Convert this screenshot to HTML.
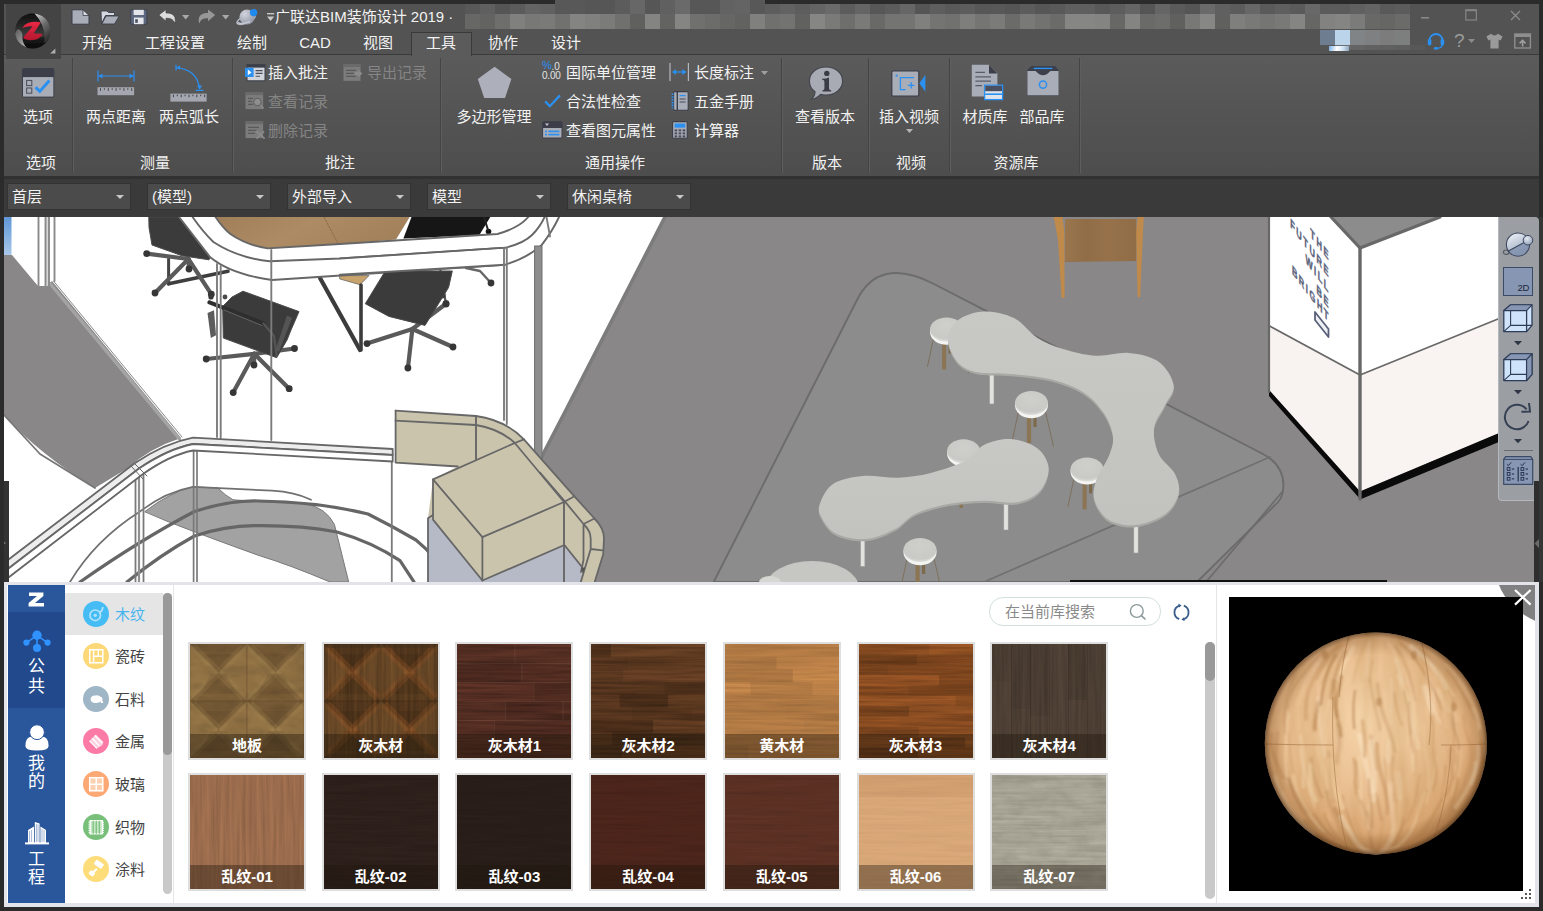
<!DOCTYPE html>
<html lang="zh-CN">
<head>
<meta charset="utf-8">
<title>广联达BIM装饰设计 2019</title>
<style>
*{box-sizing:border-box;margin:0;padding:0}
html,body{width:1543px;height:911px;overflow:hidden;background:#2b2b2b}
body{position:relative;font-family:"Liberation Sans","Noto Sans CJK SC",sans-serif;font-size:15px;color:#f2f2f2}
.abs{position:absolute}
#title{left:4px;top:4px;width:1535px;height:27px;background:#535353}
#tabs{left:4px;top:31px;width:1535px;height:24px;background:#535353;border-bottom:1px solid #3a3a3a}
#ribbon{left:4px;top:55px;width:1535px;height:121px;background:linear-gradient(#5b5b5b,#4d4d4d)}
#tbar{left:4px;top:176px;width:1535px;height:41px;background:#3a3a3a;border-top:3px solid #313131}
.tab{position:absolute;top:31px;height:24px;line-height:24px;text-align:center;white-space:nowrap;transform:translateX(-50%)}
.gl{position:absolute;top:151px;height:24px;line-height:24px;white-space:nowrap;transform:translateX(-50%)}
.bl{position:absolute;top:105px;height:24px;line-height:24px;white-space:nowrap;transform:translateX(-50%)}
.sl{position:absolute;height:24px;line-height:24px;white-space:nowrap}
.dis{color:#858585}
.sep{position:absolute;top:58px;width:2px;height:115px;background:#444;border-right:1px solid #5e5e5e}
.dd{position:absolute;top:183px;width:124px;height:27px;background:#4b4b4b;border:1px solid #333;line-height:25px;padding-left:4px;white-space:nowrap}
.dd:after{content:"";position:absolute;right:6px;top:11px;border:4px solid transparent;border-top:4px solid #c8c8c8}
#view{left:4px;top:217px;width:1531px;height:365px;background:#fff;overflow:hidden}
#panel{left:4px;top:582px;width:1535px;height:325px;background:#fff;border:3px solid #e3e3ea;border-bottom-width:4px;border-right-width:4px}

#side{left:8px;top:585px;width:57px;height:318px;background:#2a569b}
#side .sel{position:absolute;left:0;top:27px;width:57px;height:96px;background:#21498c}
.sv{position:absolute;left:0;width:57px;text-align:center;font-size:17px;line-height:18px;color:#fff}
.cat{position:absolute;left:65px;width:98px;height:42px}
.cat .ci{position:absolute;left:17.5px;top:7.5px;width:26.5px;height:26.5px;border-radius:50%}
.cat span{position:absolute;left:50px;top:10px;line-height:24px;font-size:15px;color:#444}
.th{position:absolute;width:118px;height:118px;border:2px solid #dedede;overflow:hidden;background:#876}
.th svg{position:absolute;left:0;top:0}
.th b{position:absolute;left:0;bottom:0;width:114px;height:24px;line-height:24px;background:rgba(30,20,10,.38);color:#fff;font-size:15px;text-align:center;font-weight:bold}
</style>
</head>
<body>
<div id="title" class="abs"></div>
<div id="tabs" class="abs"></div>
<div id="ribbon" class="abs"></div>
<div id="tbar" class="abs"></div>

<!-- title text -->
<div class="abs" style="left:275px;top:5px;height:24px;line-height:24px;white-space:nowrap;font-size:15px">广联达BIM装饰设计 2019 ·</div>
<!-- tabs -->
<div class="abs" style="left:411px;top:32px;width:61px;height:24px;background:#5b5b5b;border:1px solid #3a3a3a;border-bottom:none"></div>
<div class="tab" style="left:97px">开始</div>
<div class="tab" style="left:175px">工程设置</div>
<div class="tab" style="left:252px">绘制</div>
<div class="tab" style="left:315px">CAD</div>
<div class="tab" style="left:378px">视图</div>
<div class="tab" style="left:441px">工具</div>
<div class="tab" style="left:503px">协作</div>
<div class="tab" style="left:566px">设计</div>
<!-- ribbon groups -->
<div class="sep" style="left:72px"></div>
<div class="sep" style="left:232px"></div>
<div class="sep" style="left:440px"></div>
<div class="sep" style="left:781px"></div>
<div class="sep" style="left:868px"></div>
<div class="sep" style="left:949px"></div>
<div class="sep" style="left:1079px"></div>
<div class="bl" style="left:38px">选项</div>
<div class="bl" style="left:116px">两点距离</div>
<div class="bl" style="left:189px">两点弧长</div>
<div class="bl" style="left:494px">多边形管理</div>
<div class="bl" style="left:825px">查看版本</div>
<div class="bl" style="left:909px">插入视频</div>
<div class="bl" style="left:985px">材质库</div>
<div class="bl" style="left:1042px">部品库</div>
<div class="gl" style="left:41px">选项</div>
<div class="gl" style="left:155px">测量</div>
<div class="gl" style="left:340px">批注</div>
<div class="gl" style="left:615px">通用操作</div>
<div class="gl" style="left:827px">版本</div>
<div class="gl" style="left:911px">视频</div>
<div class="gl" style="left:1016px">资源库</div>
<div class="sl" style="left:268px;top:61px">插入批注</div>
<div class="sl dis" style="left:367px;top:61px">导出记录</div>
<div class="sl dis" style="left:268px;top:90px">查看记录</div>
<div class="sl dis" style="left:268px;top:119px">删除记录</div>
<div class="sl" style="left:566px;top:61px">国际单位管理</div>
<div class="sl" style="left:566px;top:90px">合法性检查</div>
<div class="sl" style="left:566px;top:119px">查看图元属性</div>
<div class="sl" style="left:694px;top:61px">长度标注</div>
<div class="sl" style="left:694px;top:90px">五金手册</div>
<div class="sl" style="left:694px;top:119px">计算器</div>
<!-- dropdowns -->
<div class="dd" style="left:7px">首层</div>
<div class="dd" style="left:147px">(模型)</div>
<div class="dd" style="left:287px">外部导入</div>
<div class="dd" style="left:427px">模型</div>
<div class="dd" style="left:567px">休闲桌椅</div>
<div class="abs" style="left:465px;top:4px;width:15px;height:10px;background:#585858"></div><div class="abs" style="left:465px;top:14px;width:15px;height:15px;background:#676765"></div><div class="abs" style="left:480px;top:4px;width:15px;height:10px;background:#5f5f5f"></div><div class="abs" style="left:480px;top:14px;width:15px;height:15px;background:#636361"></div><div class="abs" style="left:495px;top:4px;width:15px;height:10px;background:#555555"></div><div class="abs" style="left:495px;top:14px;width:15px;height:15px;background:#6e6e6c"></div><div class="abs" style="left:510px;top:4px;width:15px;height:10px;background:#5b5b5b"></div><div class="abs" style="left:510px;top:14px;width:15px;height:15px;background:#80807e"></div><div class="abs" style="left:525px;top:4px;width:15px;height:10px;background:#646464"></div><div class="abs" style="left:525px;top:14px;width:15px;height:15px;background:#787876"></div><div class="abs" style="left:540px;top:4px;width:15px;height:10px;background:#616161"></div><div class="abs" style="left:540px;top:14px;width:15px;height:15px;background:#7a7a78"></div><div class="abs" style="left:555px;top:0px;width:15px;height:15px;background:#585858"></div><div class="abs" style="left:555px;top:14px;width:15px;height:15px;background:#71716f"></div><div class="abs" style="left:570px;top:0px;width:15px;height:15px;background:#585858"></div><div class="abs" style="left:570px;top:14px;width:15px;height:15px;background:#848482"></div><div class="abs" style="left:585px;top:0px;width:15px;height:15px;background:#565656"></div><div class="abs" style="left:585px;top:14px;width:15px;height:15px;background:#80807e"></div><div class="abs" style="left:600px;top:0px;width:15px;height:15px;background:#565656"></div><div class="abs" style="left:600px;top:14px;width:15px;height:15px;background:#7b7b79"></div><div class="abs" style="left:615px;top:0px;width:15px;height:15px;background:#5c5c5c"></div><div class="abs" style="left:615px;top:14px;width:15px;height:15px;background:#70706e"></div><div class="abs" style="left:630px;top:0px;width:15px;height:15px;background:#676767"></div><div class="abs" style="left:630px;top:14px;width:15px;height:15px;background:#60605e"></div><div class="abs" style="left:645px;top:0px;width:15px;height:15px;background:#565656"></div><div class="abs" style="left:645px;top:14px;width:15px;height:15px;background:#848482"></div><div class="abs" style="left:660px;top:0px;width:15px;height:15px;background:#606060"></div><div class="abs" style="left:660px;top:14px;width:15px;height:15px;background:#636361"></div><div class="abs" style="left:675px;top:0px;width:15px;height:15px;background:#6a6a6a"></div><div class="abs" style="left:675px;top:14px;width:15px;height:15px;background:#858583"></div><div class="abs" style="left:690px;top:0px;width:15px;height:15px;background:#575757"></div><div class="abs" style="left:690px;top:14px;width:15px;height:15px;background:#70706e"></div><div class="abs" style="left:705px;top:0px;width:15px;height:15px;background:#575757"></div><div class="abs" style="left:705px;top:14px;width:15px;height:15px;background:#6c6c6a"></div><div class="abs" style="left:720px;top:0px;width:15px;height:15px;background:#626262"></div><div class="abs" style="left:720px;top:14px;width:15px;height:15px;background:#666664"></div><div class="abs" style="left:735px;top:0px;width:15px;height:15px;background:#646464"></div><div class="abs" style="left:735px;top:14px;width:15px;height:15px;background:#626260"></div><div class="abs" style="left:750px;top:0px;width:15px;height:15px;background:#585858"></div><div class="abs" style="left:750px;top:14px;width:15px;height:15px;background:#80807e"></div><div class="abs" style="left:765px;top:4px;width:15px;height:10px;background:#5d5d5d"></div><div class="abs" style="left:765px;top:14px;width:15px;height:15px;background:#70706e"></div><div class="abs" style="left:780px;top:4px;width:15px;height:10px;background:#626262"></div><div class="abs" style="left:780px;top:14px;width:15px;height:15px;background:#737371"></div><div class="abs" style="left:795px;top:4px;width:15px;height:10px;background:#5d5d5d"></div><div class="abs" style="left:795px;top:14px;width:15px;height:15px;background:#61615f"></div><div class="abs" style="left:810px;top:4px;width:15px;height:10px;background:#646464"></div><div class="abs" style="left:810px;top:14px;width:15px;height:15px;background:#868684"></div><div class="abs" style="left:825px;top:4px;width:15px;height:10px;background:#6a6a6a"></div><div class="abs" style="left:825px;top:14px;width:15px;height:15px;background:#7a7a78"></div><div class="abs" style="left:840px;top:4px;width:15px;height:10px;background:#5c5c5c"></div><div class="abs" style="left:840px;top:14px;width:15px;height:15px;background:#6e6e6c"></div><div class="abs" style="left:855px;top:4px;width:15px;height:10px;background:#646464"></div><div class="abs" style="left:855px;top:14px;width:15px;height:15px;background:#7a7a78"></div><div class="abs" style="left:870px;top:4px;width:15px;height:10px;background:#575757"></div><div class="abs" style="left:870px;top:14px;width:15px;height:15px;background:#696967"></div><div class="abs" style="left:885px;top:4px;width:15px;height:10px;background:#5c5c5c"></div><div class="abs" style="left:885px;top:14px;width:15px;height:15px;background:#747472"></div><div class="abs" style="left:900px;top:4px;width:15px;height:10px;background:#666666"></div><div class="abs" style="left:900px;top:14px;width:15px;height:15px;background:#747472"></div><div class="abs" style="left:915px;top:4px;width:15px;height:10px;background:#555555"></div><div class="abs" style="left:915px;top:14px;width:15px;height:15px;background:#80807e"></div><div class="abs" style="left:930px;top:4px;width:15px;height:10px;background:#5e5e5e"></div><div class="abs" style="left:930px;top:14px;width:15px;height:15px;background:#747472"></div><div class="abs" style="left:945px;top:4px;width:15px;height:10px;background:#595959"></div><div class="abs" style="left:945px;top:14px;width:15px;height:15px;background:#71716f"></div><div class="abs" style="left:960px;top:4px;width:15px;height:10px;background:#5d5d5d"></div><div class="abs" style="left:960px;top:14px;width:15px;height:15px;background:#7e7e7c"></div><div class="abs" style="left:975px;top:4px;width:15px;height:10px;background:#575757"></div><div class="abs" style="left:975px;top:14px;width:15px;height:15px;background:#757573"></div><div class="abs" style="left:990px;top:4px;width:15px;height:10px;background:#585858"></div><div class="abs" style="left:990px;top:14px;width:15px;height:15px;background:#7b7b79"></div><div class="abs" style="left:1005px;top:4px;width:15px;height:10px;background:#555555"></div><div class="abs" style="left:1005px;top:14px;width:15px;height:15px;background:#6b6b69"></div><div class="abs" style="left:1020px;top:4px;width:15px;height:10px;background:#5c5c5c"></div><div class="abs" style="left:1020px;top:14px;width:15px;height:15px;background:#797977"></div><div class="abs" style="left:1035px;top:4px;width:15px;height:10px;background:#565656"></div><div class="abs" style="left:1035px;top:14px;width:15px;height:15px;background:#727270"></div><div class="abs" style="left:1050px;top:4px;width:15px;height:10px;background:#595959"></div><div class="abs" style="left:1050px;top:14px;width:15px;height:15px;background:#6b6b69"></div><div class="abs" style="left:1065px;top:4px;width:15px;height:10px;background:#5f5f5f"></div><div class="abs" style="left:1065px;top:14px;width:15px;height:15px;background:#868684"></div><div class="abs" style="left:1080px;top:4px;width:15px;height:10px;background:#5f5f5f"></div><div class="abs" style="left:1080px;top:14px;width:15px;height:15px;background:#868684"></div><div class="abs" style="left:1095px;top:4px;width:15px;height:10px;background:#585858"></div><div class="abs" style="left:1095px;top:14px;width:15px;height:15px;background:#848482"></div><div class="abs" style="left:1110px;top:4px;width:15px;height:10px;background:#5d5d5d"></div><div class="abs" style="left:1110px;top:14px;width:15px;height:15px;background:#676765"></div><div class="abs" style="left:1125px;top:4px;width:15px;height:10px;background:#656565"></div><div class="abs" style="left:1125px;top:14px;width:15px;height:15px;background:#848482"></div><div class="abs" style="left:1140px;top:4px;width:15px;height:10px;background:#555555"></div><div class="abs" style="left:1140px;top:14px;width:15px;height:15px;background:#6a6a68"></div><div class="abs" style="left:1155px;top:4px;width:15px;height:10px;background:#656565"></div><div class="abs" style="left:1155px;top:14px;width:15px;height:15px;background:#6d6d6b"></div><div class="abs" style="left:1170px;top:4px;width:15px;height:10px;background:#5a5a5a"></div><div class="abs" style="left:1170px;top:14px;width:15px;height:15px;background:#60605e"></div><div class="abs" style="left:1185px;top:4px;width:15px;height:10px;background:#555555"></div><div class="abs" style="left:1185px;top:14px;width:15px;height:15px;background:#787876"></div><div class="abs" style="left:1200px;top:4px;width:15px;height:10px;background:#6a6a6a"></div><div class="abs" style="left:1200px;top:14px;width:15px;height:15px;background:#878785"></div><div class="abs" style="left:1215px;top:4px;width:15px;height:10px;background:#606060"></div><div class="abs" style="left:1215px;top:14px;width:15px;height:15px;background:#60605e"></div><div class="abs" style="left:1230px;top:4px;width:15px;height:10px;background:#5c5c5c"></div><div class="abs" style="left:1230px;top:14px;width:15px;height:15px;background:#7f7f7d"></div><div class="abs" style="left:1245px;top:4px;width:15px;height:10px;background:#676767"></div><div class="abs" style="left:1245px;top:14px;width:15px;height:15px;background:#797977"></div><div class="abs" style="left:1260px;top:4px;width:15px;height:10px;background:#5a5a5a"></div><div class="abs" style="left:1260px;top:14px;width:15px;height:15px;background:#757573"></div><div class="abs" style="left:1275px;top:4px;width:15px;height:10px;background:#5f5f5f"></div><div class="abs" style="left:1275px;top:14px;width:15px;height:15px;background:#797977"></div><div class="abs" style="left:1290px;top:4px;width:15px;height:10px;background:#5a5a5a"></div><div class="abs" style="left:1290px;top:14px;width:15px;height:15px;background:#858583"></div><div class="abs" style="left:1305px;top:4px;width:15px;height:10px;background:#686868"></div><div class="abs" style="left:1305px;top:14px;width:15px;height:15px;background:#666664"></div><div class="abs" style="left:1320px;top:4px;width:15px;height:10px;background:#5b5b5b"></div><div class="abs" style="left:1320px;top:14px;width:15px;height:15px;background:#828280"></div><div class="abs" style="left:1335px;top:4px;width:15px;height:10px;background:#5b5b5b"></div><div class="abs" style="left:1335px;top:14px;width:15px;height:15px;background:#858583"></div><div class="abs" style="left:1350px;top:4px;width:15px;height:10px;background:#606060"></div><div class="abs" style="left:1350px;top:14px;width:15px;height:15px;background:#7b7b79"></div><div class="abs" style="left:1365px;top:4px;width:15px;height:10px;background:#646464"></div><div class="abs" style="left:1365px;top:14px;width:15px;height:15px;background:#686866"></div><div class="abs" style="left:1380px;top:4px;width:15px;height:10px;background:#595959"></div><div class="abs" style="left:1380px;top:14px;width:15px;height:15px;background:#666664"></div><div class="abs" style="left:1395px;top:4px;width:15px;height:10px;background:#5c5c5c"></div><div class="abs" style="left:1395px;top:14px;width:15px;height:15px;background:#6b6b69"></div><div class="abs" style="left:1320px;top:30px;width:15px;height:15px;background:#6e7e90"></div><div class="abs" style="left:1335px;top:30px;width:15px;height:15px;background:#bcd4ea"></div><div class="abs" style="left:1350px;top:30px;width:15px;height:15px;background:#818486"></div><div class="abs" style="left:1365px;top:30px;width:15px;height:15px;background:#7f8081"></div><div class="abs" style="left:1380px;top:30px;width:15px;height:15px;background:#7c7c7c"></div><div class="abs" style="left:1395px;top:30px;width:15px;height:15px;background:#7d7f7e"></div><div class="abs" style="left:1320px;top:45px;width:15px;height:5px;background:#555"></div><div class="abs" style="left:1335px;top:45px;width:15px;height:5px;background:#6a6f75"></div><div class="abs" style="left:1350px;top:45px;width:15px;height:5px;background:#646464"></div><div class="abs" style="left:1365px;top:45px;width:15px;height:5px;background:#616161"></div><div class="abs" style="left:1380px;top:45px;width:15px;height:5px;background:#606060"></div><div class="abs" style="left:1395px;top:45px;width:15px;height:5px;background:#5e5e5e"></div><div class="abs" style="left:1410px;top:45px;width:15px;height:5px;background:#585858"></div><div class="abs" style="left:1329px;top:46px;width:20px;height:5px;background:linear-gradient(100deg,#7ab0e8,#fff 40%,#cfe2f4 70%,#8ea0b4)"></div>
<div class="abs" style="left:6px;top:4px;width:55px;height:55px;background:#444"></div><svg class="abs" style="left:14px;top:12px" width="38" height="38" viewBox="0 0 38 38" ><defs><linearGradient id="ab1" x1="0" y1="0" x2="0" y2="1"><stop offset="0" stop-color="#0e0e0e"/><stop offset=".42" stop-color="#2e2e2e"/><stop offset=".62" stop-color="#3c3c3c"/><stop offset=".72" stop-color="#1c1c1c"/><stop offset="1" stop-color="#060606"/></linearGradient>
<linearGradient id="ab2" x1=".2" y1="0" x2=".7" y2="1"><stop offset="0" stop-color="#c4c4c4"/><stop offset=".45" stop-color="#6c6c6c"/><stop offset="1" stop-color="#2c2c2c"/></linearGradient>
<linearGradient id="ab3" x1="0" y1="0" x2=".6" y2="1"><stop offset="0" stop-color="#5a5a5a"/><stop offset="1" stop-color="#a8a8a8"/></linearGradient>
<linearGradient id="abz" x1="0" y1="0" x2="0" y2="1"><stop offset="0" stop-color="#ea2846"/><stop offset="1" stop-color="#b4182e"/></linearGradient>
<filter id="abb" x="-10%" y="-10%" width="120%" height="120%"><feGaussianBlur stdDeviation=".5"/></filter></defs>
<g filter="url(#abb)"><circle cx="18.7" cy="19" r="17.6" fill="url(#ab1)"/>
<path d="M20.5 1.4A17.8 17.8 0 0 1 34.4 27.6Q33 30 30 31Q32 22 28 13Q26 7 20.5 1.4z" fill="url(#ab2)"/>
<path d="M1.2 22A17.8 17.8 0 0 0 12.6 35.6Q8 31 8.4 24Q8.6 19 4 17Q1.4 19 1.2 22z" fill="url(#ab3)"/>
<path d="M8.3 16Q10 12.5 14 11Q21 8.6 26.8 10.6L19.6 21.6Q24 21.2 28.8 22Q26.5 26 23 27.2Q17 29 12 27.6Q8.6 26.6 9.6 25L18.6 14.2Q13 14 8.3 16z" fill="url(#abz)"/></g></svg>
<svg class="abs" style="left:50px;top:48px" width="6" height="6" viewBox="0 0 6 6" ><path d="M5.4 .4V5.6H.2z" fill="#b0b0b0"/></svg>
<svg class="abs" style="left:71px;top:9px" width="19" height="16" viewBox="0 0 19 16" ><path d="M1 .8H12L18 6.5V15.2H1z" fill="#a9adb8" stroke="#3b3e48" stroke-width="1"/><path d="M12 .8V6.5H18z" fill="#d9dbe2" stroke="#3b3e48" stroke-width=".8"/></svg>
<svg class="abs" style="left:100px;top:9px" width="20" height="16" viewBox="0 0 20 16" ><path d="M1 2H7L8.5 3.5H14.5V6.5H5.5L1.5 14.5z" fill="#d5d8e0" stroke="#3b3e48" stroke-width=".9"/><path d="M6 7H19.3L14.5 15H1.8z" fill="#a9adb8" stroke="#3b3e48" stroke-width=".9"/></svg>
<svg class="abs" style="left:130px;top:9px" width="18" height="16" viewBox="0 0 18 16" ><rect x=".7" y=".7" width="16.2" height="14.6" rx="1" fill="#5d6880" stroke="#3b3e48" stroke-width=".9"/><rect x="3.6" y=".8" width="10.2" height="5.2" fill="#e3e5ea"/><rect x="4" y="8.6" width="9.6" height="6.6" fill="#e6e7ec"/><rect x="5.2" y="10.2" width="2.6" height="3.6" fill="#4a5060"/></svg>
<svg class="abs" style="left:158px;top:9px" width="19" height="15" viewBox="0 0 19 15" ><path d="M.8 6L8 .6V4Q15 3.6 17 8.5Q18 11.5 16.5 14.5Q15.6 9 8 9.2V12.2z" fill="#dcdcdc" stroke="#444" stroke-width=".7"/></svg>
<svg class="abs" style="left:182px;top:15px" width="8" height="5" viewBox="0 0 8 5" ><path d="M0 0H7.4L3.7 4.6z" fill="#a8a8a8"/></svg>
<svg class="abs" style="left:197px;top:9px" width="19" height="15" viewBox="0 0 19 15" ><path d="M18.2 6L11 .6V4Q4 3.6 2 8.5Q1 11.5 2.5 14.5Q3.4 9 11 9.2V12.2z" fill="#979797"/></svg>
<svg class="abs" style="left:222px;top:15px" width="8" height="5" viewBox="0 0 8 5" ><path d="M0 0H7.4L3.7 4.6z" fill="#a8a8a8"/></svg>
<svg class="abs" style="left:236px;top:6px" width="23" height="21" viewBox="0 0 23 21" ><defs><radialGradient id="pl" cx=".35" cy=".3" r=".8"><stop offset="0" stop-color="#d2d5de"/><stop offset="1" stop-color="#8e93a2"/></radialGradient></defs>
<ellipse cx="10" cy="13.5" rx="9.6" ry="3.6" transform="rotate(-22 10 13.5)" fill="none" stroke="#b4b8c4" stroke-width="1.5"/>
<circle cx="11" cy="11" r="7.6" fill="url(#pl)"/>
<path d="M1.5 16.5Q6 19 14 15.5" fill="none" stroke="#c4c8d2" stroke-width="1.5"/>
<circle cx="17.6" cy="6.6" r="3.7" fill="#1f8af0"/></svg>
<svg class="abs" style="left:267px;top:13px" width="8" height="9" viewBox="0 0 8 9" ><rect x="0" y="0" width="7.2" height="1.4" fill="#c8c8c8"/><path d="M0 3.4H7.2L3.6 8z" fill="#c8c8c8"/></svg>
<svg class="abs" style="left:1421px;top:16px" width="10" height="4" viewBox="0 0 10 4" ><rect x="0" y="1" width="8" height="1.6" fill="#888"/></svg>
<svg class="abs" style="left:1465px;top:9px" width="13" height="13" viewBox="0 0 13 13" ><rect x=".8" y=".8" width="10.6" height="10.2" fill="none" stroke="#858585" stroke-width="1.2"/><rect x=".8" y=".6" width="10.6" height="1.6" fill="#858585"/></svg>
<svg class="abs" style="left:1510px;top:10px" width="12" height="12" viewBox="0 0 12 12" ><path d="M1 1L10 10M10 1L1 10" stroke="#8c8c8c" stroke-width="1.3"/></svg>
<svg class="abs" style="left:1426px;top:31px" width="20" height="20" viewBox="0 0 20 20" ><path d="M3.5 11V9.5A6.5 6.5 0 0 1 16.5 9.5V11" fill="none" stroke="#2a90f2" stroke-width="1.8"/><rect x="1.8" y="8" width="3.6" height="6.4" rx="1.6" fill="#2a90f2"/><rect x="14.6" y="8" width="3.6" height="6.4" rx="1.6" fill="#2a90f2"/><path d="M16.4 13.5Q16 17 11 17.4" fill="none" stroke="#2a90f2" stroke-width="1.4"/><ellipse cx="10" cy="17.4" rx="2.2" ry="1.3" fill="#2a90f2"/></svg>
<div class="abs" style="left:1454px;top:29px;font-size:19px;line-height:24px;color:#9c9c9c;font-family:'Liberation Sans',sans-serif">?</div><svg class="abs" style="left:1468px;top:39px" width="8" height="5" viewBox="0 0 8 5" ><path d="M0 0H7L3.5 4z" fill="#8c8c8c"/></svg>
<svg class="abs" style="left:1486px;top:33px" width="18" height="17" viewBox="0 0 18 17" ><path d="M5 .8Q8.5 4 12 .8L16.6 3.6L14.6 7.6L12.6 6.6V15.6H4.4V6.600000000000001L2.4 7.6L.4 3.6z" fill="#9a9a9a"/></svg>
<svg class="abs" style="left:1514px;top:33px" width="18" height="17" viewBox="0 0 18 17" ><rect x=".8" y="1" width="15.6" height="14" fill="none" stroke="#8e8e8e" stroke-width="1.4"/><rect x=".8" y="1" width="15.6" height="3" fill="#8e8e8e"/><path d="M8.6 13.6V8M5.6 10.4L8.6 7.4L11.6 10.4" fill="none" stroke="#a0a0a0" stroke-width="1.5"/></svg>
<svg class="abs" style="left:22px;top:68px" width="33" height="30" viewBox="0 0 33 30" ><rect x=".5" y=".5" width="31.4" height="28.6" rx="1" fill="#a9adb8" stroke="#3b3e48" stroke-width="1"/><rect x=".5" y=".5" width="31.4" height="8.6" fill="#3b3e48"/><rect x="4.6" y="12.4" width="5.2" height="5.2" fill="none" stroke="#4a4d58" stroke-width="1"/><rect x="4.6" y="20" width="5.2" height="5.2" fill="none" stroke="#4a4d58" stroke-width="1"/><path d="M13.6 19.2L17.8 23.4L27.4 12.6" fill="none" stroke="#2a90f2" stroke-width="3"/></svg>
<svg class="abs" style="left:97px;top:69px" width="38" height="27" viewBox="0 0 38 27" ><path d="M1 1.5V12.5M37 1.5V12.5M1.5 7H36.500000000000002" stroke="#2a90f2" stroke-width="1.2" fill="none"/><path d="M1.6 7L5.4 4.6V9.4zM36.4 7L32.6 4.6V9.4z" fill="#2a90f2"/><g transform="translate(.5,18.2)"><rect x="0" y="0" width="36.6" height="8" fill="#a4a6b0"/><rect x="2.5" y="1" width="1" height="2.6" fill="#444"/><rect x="6.4" y="1" width="1" height="1.6" fill="#444"/><rect x="10.3" y="1" width="1" height="2.6" fill="#444"/><rect x="14.2" y="1" width="1" height="1.6" fill="#444"/><rect x="18.1" y="1" width="1" height="2.6" fill="#444"/><rect x="22.0" y="1" width="1" height="1.6" fill="#444"/><rect x="25.9" y="1" width="1" height="2.6" fill="#444"/><rect x="29.8" y="1" width="1" height="1.6" fill="#444"/><rect x="33.7" y="1" width="1" height="2.6" fill="#444"/></g></svg>
<svg class="abs" style="left:170px;top:64px" width="38" height="38" viewBox="0 0 38 38" ><path d="M6 .8V6.4M5.6 3.6Q27 5 29.6 24.6M25.600000000000001 26.400000000000002H33.6" stroke="#2a90f2" stroke-width="1.2" fill="none"/><path d="M6.4 3.6L10 1.4V5.8zM29.6 25.8L27 21.6H32z" fill="#2a90f2"/><g transform="translate(.4,29.6)"><rect x="0" y="0" width="36.2" height="8" fill="#a4a6b0"/><rect x="2.5" y="1" width="1" height="2.6" fill="#444"/><rect x="6.4" y="1" width="1" height="1.6" fill="#444"/><rect x="10.3" y="1" width="1" height="2.6" fill="#444"/><rect x="14.2" y="1" width="1" height="1.6" fill="#444"/><rect x="18.1" y="1" width="1" height="2.6" fill="#444"/><rect x="22.0" y="1" width="1" height="1.6" fill="#444"/><rect x="25.9" y="1" width="1" height="2.6" fill="#444"/><rect x="29.8" y="1" width="1" height="1.6" fill="#444"/><rect x="33.7" y="1" width="1" height="2.6" fill="#444"/></g></svg>
<svg class="abs" style="left:477px;top:66px" width="36" height="33" viewBox="0 0 36 33" ><path d="M17.6 .8L34.4 13L28 32H7.2L.8 13z" fill="#adb0ba"/></svg>
<svg class="abs" style="left:808px;top:66px" width="36" height="35" viewBox="0 0 36 35" ><path d="M18 1C27.5 1 34.6 7.2 34.6 15C34.6 22.8 27.5 29 18 29Q15 29 12.6 28.4Q8.6 32.6 3.2 33.4Q7 30.4 7 25.8Q1.4 21.8 1.4 15C1.4 7.2 8.5 1 18 1z" fill="#a9abb4" stroke="#444750" stroke-width="1.2"/><circle cx="18.8" cy="7.4" r="2.7" fill="#3b3d46"/><path d="M14.2 12.6Q17.6 12.8 21 11.4V22.4Q21.2 24 23.2 24.4V25.6H14.4V24.4Q16.4 24 16.4 22.4V15.4Q16.4 14 14.2 13.8z" fill="#3b3d46"/></svg>
<svg class="abs" style="left:891px;top:70px" width="36" height="28" viewBox="0 0 36 28" ><rect x=".8" y=".8" width="27" height="25.4" rx="1.4" fill="#a9adb8" stroke="#3b3e48" stroke-width="1.2"/><path d="M28.4 13.2L34.4 4.8V21.8z" fill="#2a90f2"/><rect x="4.6" y="4.6" width="2" height="2" fill="#2a90f2"/><path d="M23 7.6H9.4V19.6H14.6M17 15.4H23.4M20.2 12.2V18.6" fill="none" stroke="#2a90f2" stroke-width="1.3"/></svg>
<svg class="abs" style="left:906px;top:129px" width="8" height="5" viewBox="0 0 8 5" ><path d="M0 0H7L3.5 4z" fill="#b4b4b4"/></svg>
<svg class="abs" style="left:971px;top:64px" width="33" height="37" viewBox="0 0 33 37" ><path d="M.8 .8H18L26.4 9.6V32.4H.8z" fill="#a9adb8"/><path d="M18 .8V9.6H26.4z" fill="#3b3e48"/><path d="M4.4 8.4H14M4.4 12.8H20M4.4 17.2H20M4.4 21.6H11" stroke="#5a5d68" stroke-width="1.2"/><rect x="13.6" y="21.2" width="18" height="14.4" fill="#dfe3ea" stroke="#2a90f2" stroke-width="1.3"/><rect x="14.2" y="21.8" width="16.8" height="5.4" fill="#4a5060"/><path d="M14.2 30.2H31" stroke="#2a90f2" stroke-width="1.6"/></svg>
<svg class="abs" style="left:1026px;top:65px" width="34" height="32" viewBox="0 0 34 32" ><path d="M5 1H29L33 5.6V30.6H1V5.6z" fill="#3d404a"/><path d="M1.4 6H9.6Q17 14.4 24.4 6H32.6V30.2H1.4z" fill="#a9adb8"/><path d="M7.6 3.4H26.4" stroke="#2a90f2" stroke-width="1.4"/><circle cx="17" cy="19.6" r="3.6" fill="none" stroke="#2a90f2" stroke-width="1.5"/></svg>
<svg class="abs" style="left:245px;top:64px" width="21" height="18" viewBox="0 0 21 18" ><rect x="2" y=".6" width="18" height="16.2" fill="#d2d4dc" stroke="#3b3e48" stroke-width="1"/><rect x="2" y=".6" width="18" height="3" fill="#3b3e48"/><rect x="0" y="3.8" width="8.6" height="9.2" fill="#2a90f2"/><path d="M2.8 5.6L6.6 8.4L2.8 11.2z" fill="#fff"/><path d="M10.6 6.6H17.6M10.6 9.4H17.6M10.6 12.2H15" stroke="#4a4d58" stroke-width="1.1"/></svg>
<svg class="abs" style="left:343px;top:64px" width="21" height="18" viewBox="0 0 21 18" ><rect x=".5" y=".5" width="17" height="16.4" fill="#7c7c7c"/><rect x=".5" y=".5" width="17" height="2.6" fill="#6a6a6a"/><path d="M3 6.4H13M3 9.4H11M3 12.4H13" stroke="#5a5a5a" stroke-width="1.1"/><path d="M11.6 8H15.6V6L19.4 9.6L15.6 13.2V11.2H11.6z" fill="#8a8a8a"/></svg>
<svg class="abs" style="left:245px;top:92px" width="21" height="19" viewBox="0 0 21 19" ><rect x=".5" y=".5" width="17.6" height="16.6" fill="#7c7c7c"/><rect x=".5" y=".5" width="17.6" height="2.6" fill="#6a6a6a"/><path d="M3 6.4H8M3 9.4H7M3 12.4H8" stroke="#5a5a5a" stroke-width="1.1"/><circle cx="12.4" cy="10" r="3.8" fill="#8e8e8e" stroke="#5e5e5e" stroke-width="1"/><path d="M15.4 13L18.6 16.4" stroke="#8a8a8a" stroke-width="1.6"/></svg>
<svg class="abs" style="left:245px;top:121px" width="21" height="19" viewBox="0 0 21 19" ><rect x=".5" y=".5" width="17.6" height="16.6" fill="#7c7c7c"/><rect x=".5" y=".5" width="17.6" height="2.6" fill="#6a6a6a"/><path d="M3 6.4H14M3 9.4H12M3 12.4H10" stroke="#5a5a5a" stroke-width="1.1"/><path d="M11 10L19.6 17.6M19 10.4L11.6 17.6" stroke="#8a8a8a" stroke-width="1.8"/></svg>
<div class="abs" style="left:542px;top:61px;width:24px;font:10px/9.5px 'Liberation Sans',sans-serif;color:#e4e4e4;letter-spacing:-.2px;white-space:nowrap"><span style="color:#2a90f2;font-size:11px">%</span><span style="position:relative;top:1px">.0</span><br>0.00</div><svg class="abs" style="left:544px;top:94px" width="18" height="15" viewBox="0 0 18 15" ><path d="M1.2 7.4L5.8 12.2L16 1.4" fill="none" stroke="#2a90f2" stroke-width="2.3"/></svg>
<svg class="abs" style="left:542px;top:121px" width="21" height="18" viewBox="0 0 21 18" ><rect x=".6" y=".6" width="19.4" height="16.4" rx="1" fill="#a9adb8" stroke="#3b3e48" stroke-width="1"/><rect x=".6" y=".6" width="19.4" height="6.4" fill="#3b3e48"/><path d="M3 2.6H7L5 5z" fill="#c4c6ce"/><rect x="3" y="9.6" width="2" height="1.6" fill="#2a90f2"/><rect x="6.4" y="9.6" width="11" height="1.6" fill="#2a90f2"/><rect x="3" y="12.8" width="2" height="1.6" fill="#2a90f2"/><rect x="6.4" y="12.8" width="11" height="1.6" fill="#2a90f2"/></svg>
<svg class="abs" style="left:669px;top:63px" width="21" height="19" viewBox="0 0 21 19" ><path d="M1 0V18M19.4 0V18" stroke="#b4b6be" stroke-width="1.2"/><path d="M4 9H16.4" stroke="#2a90f2" stroke-width="1.3"/><path d="M3 9L7 6V12zM17.4 9L13.4 6V12z" fill="#2a90f2"/></svg>
<svg class="abs" style="left:761px;top:71px" width="8" height="5" viewBox="0 0 8 5" ><path d="M0 0H7L3.5 4z" fill="#a0a0a0"/></svg>
<svg class="abs" style="left:671px;top:91px" width="19" height="20" viewBox="0 0 19 20" ><rect x="2.6" y=".6" width="14.6" height="18.6" rx="1" fill="#a9adb8" stroke="#3b3e48" stroke-width="1.1"/><path d="M1.6 2.4V17.6" stroke="#2a90f2" stroke-width="2" stroke-dasharray="1.6 1.2"/><rect x="5.600000000000001" y=".6" width="1.4" height="18.6" fill="#3b3e48"/><path d="M8.6 4.6H14.6" stroke="#2a90f2" stroke-width="1.3"/><path d="M8.6 8H14.6M8.6 11H14.6" stroke="#4a4d58" stroke-width="1.1"/></svg>
<svg class="abs" style="left:672px;top:121px" width="17" height="18" viewBox="0 0 17 18" ><rect x=".6" y=".6" width="14.6" height="16.6" rx="1" fill="#a9adb8" stroke="#3b3e48" stroke-width="1.1"/><rect x="2.6" y="2.6" width="10.6" height="4" fill="#2a90f2"/><rect x="2.6" y="8.4" width="2.6" height="2" fill="#4a4d58"/><rect x="6.6" y="8.4" width="2.6" height="2" fill="#4a4d58"/><rect x="10.6" y="8.4" width="2.6" height="2" fill="#4a4d58"/><rect x="2.6" y="11.4" width="2.6" height="2" fill="#4a4d58"/><rect x="6.6" y="11.4" width="2.6" height="2" fill="#4a4d58"/><rect x="10.6" y="11.4" width="2.6" height="2" fill="#4a4d58"/><rect x="2.6" y="14.4" width="2.6" height="2" fill="#4a4d58"/><rect x="6.6" y="14.4" width="2.6" height="2" fill="#4a4d58"/><rect x="10.6" y="14.4" width="2.6" height="2" fill="#4a4d58"/></svg>

<div id="view" class="abs"><svg width="1531" height="365" viewBox="4 217 1531 365" style="position:absolute;left:0;top:0"><defs><radialGradient id="stg" cx=".5" cy=".35" r=".7"><stop offset="0" stop-color="#cfcfcb"/><stop offset=".75" stop-color="#c9c9c5"/><stop offset="1" stop-color="#e6e6e3"/></radialGradient><linearGradient id="tbg" x1="0" y1="0" x2="0" y2="1"><stop offset="0" stop-color="#c8c9c4"/><stop offset="1" stop-color="#c2c3be"/></linearGradient><linearGradient id="wd" x1="0" y1="0" x2="1" y2=".3"><stop offset="0" stop-color="#a07e58"/><stop offset=".5" stop-color="#ad8b64"/><stop offset="1" stop-color="#a3815a"/></linearGradient><linearGradient id="glb" x1="0" y1="0" x2="0" y2="1"><stop offset="0" stop-color="#5f97d6"/><stop offset="1" stop-color="#a9c8ea"/></linearGradient><linearGradient id="wcg" x1="0" y1="0" x2="1" y2="0"><stop offset="0" stop-color="#a27c52"/><stop offset=".3" stop-color="#8e6a44"/><stop offset=".6" stop-color="#9a744c"/><stop offset="1" stop-color="#8e6a44"/></linearGradient></defs><rect x="4" y="217" width="1531" height="365" fill="#fff"/><polygon points="665.0,217.0 1535.0,217.0 1535.0,582.0 594.7,582.0 603.2,554.3 604.0,538.5 594.0,518.0 540.0,458.0 566.0,410.0" fill="#898787" /><polyline points="665.0,217.0 566.0,410.0 540.0,460.0" fill="none" stroke="#7c7c7c" stroke-width="3.6" stroke-linejoin="round" stroke-linecap="round" /><path d="M856 302Q878 255 934 284L1262 453.5Q1286 466 1283 490Q1282 500 1274 506L1197 582L713.7 582Z" fill="#8c8c8c" stroke="#6c6c6c" stroke-width="1.9" stroke-linejoin="round" stroke-linecap="round" /><polyline points="1283.0,491.0 1206.0,582.0" fill="none" stroke="#6c6c6c" stroke-width="1.7" stroke-linejoin="round" stroke-linecap="round" /><polyline points="1270.0,457.0 984.0,582.0" fill="none" stroke="#707070" stroke-width="1.7" stroke-linejoin="round" stroke-linecap="round" /><rect x="1070" y="580" width="317" height="2" fill="#111"/><path d="M4 255L12 255L38 286L47 286L52 281L181 438Q150 448 128 468L95 488Q40 455 4 415Z" fill="#898787" /><polyline points="50.0,283.5 179.5,439.0" fill="none" stroke="#a4a4a4" stroke-width="3.4" stroke-linejoin="round" stroke-linecap="round" /><polyline points="53.5,281.0 182.0,437.0" fill="none" stroke="#8a8a8a" stroke-width="1" stroke-linejoin="round" stroke-linecap="round" /><polyline points="4.0,415.0 40.0,454.0 95.0,488.0" fill="none" stroke="#777" stroke-width="1.8" stroke-linejoin="round" stroke-linecap="round" /><rect x="4" y="217" width="7.5" height="38" fill="url(#glb)"/><rect x="45.5" y="217" width="3.5" height="68" fill="#d8d8d8"/><polyline points="38.5,217.0 38.5,286.5" fill="none" stroke="#8a8a8a" stroke-width="1.9" stroke-linejoin="round" stroke-linecap="round" /><polyline points="45.5,217.0 45.5,288.0" fill="none" stroke="#8a8a8a" stroke-width="1.9" stroke-linejoin="round" stroke-linecap="round" /><polyline points="49.0,217.0 49.0,285.0" fill="none" stroke="#8a8a8a" stroke-width="1.9" stroke-linejoin="round" stroke-linecap="round" /><polyline points="54.5,217.0 54.5,281.0" fill="none" stroke="#8a8a8a" stroke-width="1.9" stroke-linejoin="round" stroke-linecap="round" /><polyline points="38.5,286.5 45.5,288.0" fill="none" stroke="#8a8a8a" stroke-width="1" stroke-linejoin="round" stroke-linecap="round" /><path d="M215.5 217Q223 228 230 233.8Q246 245 267.6 248.4L340 244L396 239.4L409.7 217Z" fill="url(#wd)" /><polyline points="324.0,217.0 338.0,243.5" fill="none" stroke="#7a6040" stroke-width="0.7" stroke-linejoin="round" stroke-linecap="round" stroke-dasharray="2 1.5"/><path d="M340 275.6L369 275.6L360 284.7L340 279Z" fill="#c8a46c" stroke="#676767" stroke-width="0.8" stroke-linejoin="round" stroke-linecap="round" /><polyline points="320.0,278.0 360.0,350.0" fill="none" stroke="#3c3c3c" stroke-width="4.2" stroke-linejoin="round" stroke-linecap="round" /><polyline points="361.0,285.0 361.0,350.0" fill="none" stroke="#3c3c3c" stroke-width="3.6" stroke-linejoin="round" stroke-linecap="round" /><polyline points="466.0,268.0 480.0,271.0 491.0,283.0" fill="none" stroke="#666" stroke-width="2.4" stroke-linejoin="round" stroke-linecap="round" /><circle cx="491.0" cy="283.0" r="3.4" fill="#363636"/><polyline points="440.0,268.0 446.0,304.0" fill="none" stroke="#555" stroke-width="2.2" stroke-linejoin="round" stroke-linecap="round" /><circle cx="446.0" cy="304.0" r="3.4" fill="#363636"/><circle cx="442.0" cy="295.0" r="3.4" fill="#363636"/><polygon points="411.5,217.0 490.3,217.0 479.4,235.0 403.4,238.5" fill="#161616" /><circle cx="488.5" cy="231.5" r="2.8" fill="#111"/><polyline points="484.0,217.0 488.0,230.0" fill="none" stroke="#222" stroke-width="2" stroke-linejoin="round" stroke-linecap="round" /><polyline points="168.6,259.0 168.6,284.0" fill="none" stroke="#444" stroke-width="3" stroke-linejoin="round" stroke-linecap="round" /><polyline points="168.6,283.8 228.0,271.3" fill="none" stroke="#3e3e3e" stroke-width="3.6" stroke-linejoin="round" stroke-linecap="round" /><polyline points="188.4,259.0 155.0,293.0" fill="none" stroke="#5a5a5a" stroke-width="4.2" stroke-linejoin="round" stroke-linecap="round" /><circle cx="155.0" cy="293.0" r="3.4" fill="#363636"/><polyline points="188.4,259.0 211.3,294.2" fill="none" stroke="#5a5a5a" stroke-width="4.2" stroke-linejoin="round" stroke-linecap="round" /><circle cx="211.3" cy="294.2" r="3.4" fill="#363636"/><polyline points="188.4,259.0 146.7,253.6" fill="none" stroke="#5a5a5a" stroke-width="4.2" stroke-linejoin="round" stroke-linecap="round" /><circle cx="146.7" cy="253.6" r="3.4" fill="#363636"/><polyline points="188.4,259.0 189.0,269.0" fill="none" stroke="#5a5a5a" stroke-width="4.2" stroke-linejoin="round" stroke-linecap="round" /><circle cx="189.0" cy="269.0" r="3.4" fill="#363636"/><polygon points="148.8,217.0 179.0,217.0 210.3,257.8 209.0,259.8 182.0,255.7 152.0,245.0 149.0,227.5" fill="#3b3b3b" stroke="#4a4a4a" stroke-width="1" stroke-linejoin="round" /><path d="M179 217L210 257Q230 274 272 280L504.8 264.8Q527 258 541 245.8Q552 232 559 217L528.3 217Q519 228 497.5 234L340 244L267.6 248.4Q246 245 230 233.8Q223 228 215.5 217Z" fill="#fff" /><path d="M179 217L210 257Q230 274 272 280L504.8 264.8Q527 258 541 245.8Q552 232 559 217" fill="none" stroke="#676767" stroke-width="1.9" stroke-linejoin="round" stroke-linecap="round" /><path d="M215.5 217Q223 228 230 233.8Q246 245 267.6 248.4L340 244L497.5 234Q519 228 528.3 217" fill="none" stroke="#676767" stroke-width="1.9" stroke-linejoin="round" stroke-linecap="round" /><path d="M192.6 217Q203 232 213.4 242Q238 258 269.7 261.3L340 258.5L505.7 247.6Q524 243 532 235Q540 227 544.6 217" fill="none" stroke="#676767" stroke-width="1.9" stroke-linejoin="round" stroke-linecap="round" /><polyline points="412.4,329.0 367.0,343.6" fill="none" stroke="#5a5a5a" stroke-width="4.2" stroke-linejoin="round" stroke-linecap="round" /><circle cx="367.0" cy="343.6" r="3.4" fill="#363636"/><polyline points="412.4,329.0 407.9,368.0" fill="none" stroke="#5a5a5a" stroke-width="4.2" stroke-linejoin="round" stroke-linecap="round" /><circle cx="407.9" cy="368.0" r="3.4" fill="#363636"/><polyline points="412.4,329.0 453.0,347.0" fill="none" stroke="#5a5a5a" stroke-width="4.2" stroke-linejoin="round" stroke-linecap="round" /><circle cx="453.0" cy="347.0" r="3.4" fill="#363636"/><polyline points="412.4,329.0 446.0,303.7" fill="none" stroke="#5a5a5a" stroke-width="4.2" stroke-linejoin="round" stroke-linecap="round" /><circle cx="446.0" cy="303.7" r="3.4" fill="#363636"/><polygon points="365.3,303.7 385.3,271.0 452.3,271.0 448.6,287.4 425.0,325.4 388.9,316.4" fill="#3b3b3b" stroke="#4a4a4a" stroke-width="1" stroke-linejoin="round" /><path d="M340 274.7L504.8 264.8L505 249L340 259Z" fill="#fff" /><polyline points="340.0,274.7 504.8,264.8" fill="none" stroke="#676767" stroke-width="1.9" stroke-linejoin="round" stroke-linecap="round" /><polyline points="340.0,258.5 505.7,247.6" fill="none" stroke="#676767" stroke-width="1.9" stroke-linejoin="round" stroke-linecap="round" /><polyline points="254.3,353.8 206.2,359.0" fill="none" stroke="#5a5a5a" stroke-width="4.2" stroke-linejoin="round" stroke-linecap="round" /><circle cx="206.2" cy="359.0" r="3.4" fill="#363636"/><polyline points="254.3,353.8 233.2,392.6" fill="none" stroke="#5a5a5a" stroke-width="4.2" stroke-linejoin="round" stroke-linecap="round" /><circle cx="233.2" cy="392.6" r="3.4" fill="#363636"/><polyline points="254.3,353.8 289.2,388.7" fill="none" stroke="#5a5a5a" stroke-width="4.2" stroke-linejoin="round" stroke-linecap="round" /><circle cx="289.2" cy="388.7" r="3.4" fill="#363636"/><polyline points="254.3,353.8 294.5,348.5" fill="none" stroke="#5a5a5a" stroke-width="4.2" stroke-linejoin="round" stroke-linecap="round" /><circle cx="294.5" cy="348.5" r="3.4" fill="#363636"/><polyline points="254.3,353.8 254.0,365.0" fill="none" stroke="#5a5a5a" stroke-width="4.2" stroke-linejoin="round" stroke-linecap="round" /><circle cx="254.0" cy="365.0" r="3.4" fill="#363636"/><polygon points="222.7,306.4 232.0,297.0 243.0,291.2 299.0,311.6 291.0,330.0 287.0,340.0 276.7,357.7 266.0,353.8 223.3,338.0" fill="#3b3b3b" stroke="#4a4a4a" stroke-width="1" stroke-linejoin="round" /><polygon points="207.5,313.0 214.0,310.3 216.0,335.3 210.8,338.0" fill="#5c5c5c" /><polyline points="209.5,302.4 263.5,323.5" fill="none" stroke="#2e2e2e" stroke-width="4.2" stroke-linejoin="round" stroke-linecap="round" /><polyline points="263.5,323.5 274.0,336.0 276.7,356.0" fill="none" stroke="#555" stroke-width="2.2" stroke-linejoin="round" stroke-linecap="round" /><polygon points="287.0,315.6 292.0,318.0 279.0,352.0 275.5,350.0" fill="#555" /><polyline points="224.0,310.0 262.0,325.5" fill="none" stroke="#6a6a66" stroke-width="0.9" stroke-linejoin="round" stroke-linecap="round" /><circle cx="211.0" cy="297.0" r="2.6" fill="#383838"/><circle cx="225.0" cy="297.0" r="2.4" fill="#4a4a4a"/><polyline points="217.0,264.0 217.0,437.0" fill="none" stroke="#7c7c7c" stroke-width="1.9" stroke-linejoin="round" stroke-linecap="round" /><polyline points="220.7,266.0 220.7,438.0" fill="none" stroke="#7c7c7c" stroke-width="1.9" stroke-linejoin="round" stroke-linecap="round" /><polyline points="271.3,250.0 271.3,440.0" fill="none" stroke="#7c7c7c" stroke-width="1.9" stroke-linejoin="round" stroke-linecap="round" /><polyline points="504.0,248.0 504.0,420.0" fill="none" stroke="#7c7c7c" stroke-width="1.9" stroke-linejoin="round" stroke-linecap="round" /><polyline points="506.8,248.0 506.8,424.0" fill="none" stroke="#7c7c7c" stroke-width="1.9" stroke-linejoin="round" stroke-linecap="round" /><rect x="534.6" y="246" width="7.4" height="212" fill="#8d8d8d" stroke="#6e6e6e" stroke-width="1"/><polyline points="546.5,217.0 550.0,236.5" fill="none" stroke="#7c7c7c" stroke-width="1.9" stroke-linejoin="round" stroke-linecap="round" /><path d="M145 511.5Q170 492 193 486.8L217.8 488Q226 496 233 499.8Q270 503 306 503.7Q326 508 334.4 524.4L348.7 582L330 582Q290 565 259 555.5Q210 538 168.5 521.8Z" fill="#a3a2a2" stroke="#787878" stroke-width="1" stroke-linejoin="round" stroke-linecap="round" /><path d="M70 582Q95 540 140 511.5Q165 492 193 486.8L272 490.7Q295 492 311 499.8" fill="none" stroke="#707070" stroke-width="1.7" stroke-linejoin="round" stroke-linecap="round" /><path d="M80 582Q140 540 194.4 511.5Q230 500 259 501Q320 502 368 514Q392 526 416 540Q436 556 450 582" fill="none" stroke="#666" stroke-width="3.2" stroke-linejoin="round" stroke-linecap="round" /><path d="M127 582Q160 555 194.4 536Q225 526 254 525.7Q300 525 337 532Q372 542 400 560.7L414 582" fill="none" stroke="#666" stroke-width="3.2" stroke-linejoin="round" stroke-linecap="round" /><polyline points="135.5,473.0 135.5,582.0" fill="none" stroke="#7a7a7a" stroke-width="1.8" stroke-linejoin="round" stroke-linecap="round" /><polyline points="139.0,471.0 139.0,582.0" fill="none" stroke="#909090" stroke-width="2.2" stroke-linejoin="round" stroke-linecap="round" /><polyline points="143.5,468.0 143.5,582.0" fill="none" stroke="#7a7a7a" stroke-width="1.8" stroke-linejoin="round" stroke-linecap="round" /><polyline points="193.6,440.0 193.6,582.0" fill="none" stroke="#7a7a7a" stroke-width="1.7" stroke-linejoin="round" stroke-linecap="round" /><polyline points="197.0,440.0 197.0,582.0" fill="none" stroke="#7a7a7a" stroke-width="1.7" stroke-linejoin="round" stroke-linecap="round" /><polyline points="391.8,449.0 391.8,582.0" fill="none" stroke="#7a7a7a" stroke-width="1.8" stroke-linejoin="round" stroke-linecap="round" /><path d="M4 563L135 463Q165 443 193 437.6L392.7 449L392.7 455L193 444Q168 449 139 468.5L4 572Z" fill="#ededed" stroke="#676767" stroke-width="1.8" stroke-linejoin="round" stroke-linecap="round" /><path d="M4 572L139 468.5Q168 449 193 444L392.7 455L392.7 461.5L193 450.5Q170 455 143 474L4 581Z" fill="#fff" stroke="#676767" stroke-width="1.8" stroke-linejoin="round" stroke-linecap="round" /><polyline points="131.0,466.0 143.0,479.0" fill="none" stroke="#676767" stroke-width="1" stroke-linejoin="round" stroke-linecap="round" /><polyline points="134.5,463.5 147.0,476.0" fill="none" stroke="#676767" stroke-width="1" stroke-linejoin="round" stroke-linecap="round" /><path d="M395.6 410.7L476 416Q505 420 523.9 439.3L574.4 496.3L594 518Q604 528 604 538.5L603.2 554.3L594.7 582L428 582L428 518L433 479.4L457.8 466.5L395.6 462.6Z" fill="#cbc4ad" /><polygon points="428.0,518.3 433.0,519.6 482.4,580.5 482.4,582.0 428.0,582.0" fill="#b6bac6" /><polygon points="482.4,580.5 564.0,545.5 564.0,582.0 482.4,582.0" fill="#b6bac6" /><polygon points="564.4,545.0 582.0,567.0 580.8,582.0 564.4,582.0" fill="#b6bac6" /><path d="M395.6 410.7L476 416Q505 420 523.9 439.3L574.4 496.3L594 518Q604 528 604 538.5L603.2 554.3L594.7 582" fill="none" stroke="#676767" stroke-width="1.8" stroke-linejoin="round" stroke-linecap="round" /><polyline points="395.6,410.7 395.6,462.6 457.8,466.5" fill="none" stroke="#676767" stroke-width="1.8" stroke-linejoin="round" stroke-linecap="round" /><path d="M395.6 420.6L476 425Q500 429 514.8 443" fill="none" stroke="#676767" stroke-width="1.9" stroke-linejoin="round" stroke-linecap="round" /><polyline points="476.0,416.0 476.0,460.0" fill="none" stroke="#676767" stroke-width="1.9" stroke-linejoin="round" stroke-linecap="round" /><polygon points="433.0,479.4 514.8,443.0 564.0,502.0 482.4,537.2" fill="#cbc4ad" stroke="#676767" stroke-width="1.8" stroke-linejoin="round" /><polyline points="514.8,443.0 523.9,439.3" fill="none" stroke="#676767" stroke-width="1.8" stroke-linejoin="round" stroke-linecap="round" /><polyline points="564.0,502.0 574.4,496.3" fill="none" stroke="#676767" stroke-width="1.8" stroke-linejoin="round" stroke-linecap="round" /><polyline points="433.0,479.4 433.0,519.6 482.4,580.5 482.4,537.2" fill="none" stroke="#676767" stroke-width="1.8" stroke-linejoin="round" stroke-linecap="round" /><polyline points="428.0,582.0 428.0,518.3 433.0,515.0" fill="none" stroke="#676767" stroke-width="1.8" stroke-linejoin="round" stroke-linecap="round" /><polyline points="564.0,502.0 564.0,582.0" fill="none" stroke="#676767" stroke-width="1.9" stroke-linejoin="round" stroke-linecap="round" /><polyline points="482.4,580.5 564.4,545.0 582.0,567.0" fill="none" stroke="#676767" stroke-width="1.9" stroke-linejoin="round" stroke-linecap="round" /><path d="M540 472.6L565 501.6L583.5 524Q590.7 531 590.7 538.5L590.7 549L580.8 582M583.5 524L594 518.7M590.7 549L602.6 550.4M583.5 524L583.5 560L581 572" fill="none" stroke="#676767" stroke-width="1.8" stroke-linejoin="round" stroke-linecap="round" /><polygon points="581.0,567.5 585.0,567.5 583.0,574.0" fill="#555" /><rect x="989.6" y="372.0" width="4.4" height="32.0" fill="#e2e2e0" stroke="#9a9a98" stroke-width=".6"/><rect x="1003.8" y="500.0" width="4.4" height="30.0" fill="#e2e2e0" stroke="#9a9a98" stroke-width=".6"/><rect x="860.5" y="537.0" width="4.4" height="29.5" fill="#e2e2e0" stroke="#9a9a98" stroke-width=".6"/><rect x="1133.8" y="523.0" width="4.4" height="30.0" fill="#e2e2e0" stroke="#9a9a98" stroke-width=".6"/><rect x="959.5" y="498" width="3.4" height="10" fill="#8b7555"/><polyline points="934.5,333.5 927.5,366.5" fill="none" stroke="#7a6a50" stroke-width="0.8" stroke-linejoin="round" stroke-linecap="round" /><polyline points="959.5,333.5 968.5,372.5" fill="none" stroke="#7a6a50" stroke-width="0.8" stroke-linejoin="round" stroke-linecap="round" /><rect x="942.0" y="339.5" width="4.2" height="30" fill="#8b7555"/><rect x="948.5" y="339.5" width="3.2" height="14" fill="#7d6a4c"/><ellipse cx="946.5" cy="331.7" rx="16.5" ry="13.0" fill="#f4f4f2"/><ellipse cx="946.5" cy="329.5" rx="16.5" ry="12.0" fill="url(#stg)"/><polyline points="1019.4,407.0 1012.4,440.0" fill="none" stroke="#7a6a50" stroke-width="0.8" stroke-linejoin="round" stroke-linecap="round" /><polyline points="1044.4,407.0 1053.4,446.0" fill="none" stroke="#7a6a50" stroke-width="0.8" stroke-linejoin="round" stroke-linecap="round" /><rect x="1026.9" y="413.0" width="4.2" height="30" fill="#8b7555"/><rect x="1033.4" y="413.0" width="3.2" height="14" fill="#7d6a4c"/><ellipse cx="1031.4" cy="405.2" rx="16.5" ry="13.0" fill="#f4f4f2"/><ellipse cx="1031.4" cy="403.0" rx="16.5" ry="12.0" fill="url(#stg)"/><ellipse cx="963.6" cy="453.5" rx="16.5" ry="13.0" fill="#f4f4f2"/><ellipse cx="963.6" cy="451.3" rx="16.5" ry="12.0" fill="url(#stg)"/><polyline points="1075.0,473.4 1068.0,506.4" fill="none" stroke="#7a6a50" stroke-width="0.8" stroke-linejoin="round" stroke-linecap="round" /><polyline points="1100.0,473.4 1109.0,512.4" fill="none" stroke="#7a6a50" stroke-width="0.8" stroke-linejoin="round" stroke-linecap="round" /><rect x="1082.5" y="479.4" width="4.2" height="30" fill="#8b7555"/><rect x="1089.0" y="479.4" width="3.2" height="14" fill="#7d6a4c"/><ellipse cx="1087.0" cy="471.6" rx="16.5" ry="13.0" fill="#f4f4f2"/><ellipse cx="1087.0" cy="469.4" rx="16.5" ry="12.0" fill="url(#stg)"/><polyline points="908.0,554.0 901.0,587.0" fill="none" stroke="#7a6a50" stroke-width="0.8" stroke-linejoin="round" stroke-linecap="round" /><polyline points="933.0,554.0 942.0,593.0" fill="none" stroke="#7a6a50" stroke-width="0.8" stroke-linejoin="round" stroke-linecap="round" /><rect x="915.5" y="560.0" width="4.2" height="30" fill="#8b7555"/><rect x="922.0" y="560.0" width="3.2" height="14" fill="#7d6a4c"/><ellipse cx="920.0" cy="552.2" rx="16.5" ry="13.0" fill="#f4f4f2"/><ellipse cx="920.0" cy="550.0" rx="16.5" ry="12.0" fill="url(#stg)"/><path d="M948.0 339.4C948.0 332.3 952.0 324.7 958.0 320.0C964.0 315.3 974.7 311.7 984.0 311.4C993.3 311.1 1005.2 313.6 1014.0 318.0C1022.8 322.4 1028.8 332.5 1037.0 337.7C1045.2 342.9 1053.2 346.0 1063.0 349.0C1072.8 352.0 1085.0 355.1 1096.0 355.8C1107.0 356.5 1118.5 352.0 1129.0 353.0C1139.5 354.0 1151.5 356.6 1159.0 362.0C1166.5 367.4 1172.7 378.3 1173.7 385.5C1174.7 392.7 1168.3 397.9 1165.0 405.0C1161.7 412.1 1155.0 419.7 1154.0 428.0C1153.0 436.3 1155.5 446.9 1159.0 454.6C1162.5 462.3 1171.7 467.4 1175.0 474.0C1178.3 480.6 1180.3 487.3 1178.6 494.0C1176.9 500.7 1172.1 508.8 1165.0 514.0C1157.9 519.2 1145.1 524.0 1135.8 525.0C1126.5 526.0 1115.8 524.0 1109.0 520.0C1102.2 516.0 1096.9 507.2 1094.7 500.7C1092.5 494.2 1093.5 488.7 1096.0 481.0C1098.5 473.3 1106.7 462.3 1109.5 454.6C1112.3 446.9 1113.9 442.0 1112.8 434.9C1111.7 427.8 1108.0 418.9 1103.0 411.8C1098.0 404.7 1091.8 397.5 1083.0 392.0C1074.2 386.5 1062.0 382.0 1050.0 379.0C1038.0 376.0 1022.7 375.1 1010.7 374.0C998.7 372.9 986.6 374.2 977.8 372.3C969.0 370.4 963.0 367.9 958.0 362.4C953.0 356.9 948.0 346.5 948.0 339.4Z" fill="#a8a8a4" transform="translate(0,2.2)"/><path d="M948.0 339.4C948.0 332.3 952.0 324.7 958.0 320.0C964.0 315.3 974.7 311.7 984.0 311.4C993.3 311.1 1005.2 313.6 1014.0 318.0C1022.8 322.4 1028.8 332.5 1037.0 337.7C1045.2 342.9 1053.2 346.0 1063.0 349.0C1072.8 352.0 1085.0 355.1 1096.0 355.8C1107.0 356.5 1118.5 352.0 1129.0 353.0C1139.5 354.0 1151.5 356.6 1159.0 362.0C1166.5 367.4 1172.7 378.3 1173.7 385.5C1174.7 392.7 1168.3 397.9 1165.0 405.0C1161.7 412.1 1155.0 419.7 1154.0 428.0C1153.0 436.3 1155.5 446.9 1159.0 454.6C1162.5 462.3 1171.7 467.4 1175.0 474.0C1178.3 480.6 1180.3 487.3 1178.6 494.0C1176.9 500.7 1172.1 508.8 1165.0 514.0C1157.9 519.2 1145.1 524.0 1135.8 525.0C1126.5 526.0 1115.8 524.0 1109.0 520.0C1102.2 516.0 1096.9 507.2 1094.7 500.7C1092.5 494.2 1093.5 488.7 1096.0 481.0C1098.5 473.3 1106.7 462.3 1109.5 454.6C1112.3 446.9 1113.9 442.0 1112.8 434.9C1111.7 427.8 1108.0 418.9 1103.0 411.8C1098.0 404.7 1091.8 397.5 1083.0 392.0C1074.2 386.5 1062.0 382.0 1050.0 379.0C1038.0 376.0 1022.7 375.1 1010.7 374.0C998.7 372.9 986.6 374.2 977.8 372.3C969.0 370.4 963.0 367.9 958.0 362.4C953.0 356.9 948.0 346.5 948.0 339.4Z" fill="url(#tbg)"/><path d="M819.8 504.0C821.7 498.5 825.9 488.7 833.0 484.0C840.1 479.3 851.5 477.1 862.5 476.0C873.5 474.9 887.3 478.2 898.8 477.7C910.3 477.1 920.7 475.5 931.7 472.7C942.7 469.9 955.8 465.7 964.6 461.0C973.4 456.3 976.7 448.4 984.4 444.7C992.1 441.0 1001.9 438.4 1010.7 439.0C1019.5 439.6 1030.7 443.2 1037.0 448.0C1043.3 452.8 1048.1 460.7 1048.6 467.8C1049.1 474.9 1045.2 485.1 1040.0 490.8C1034.8 496.6 1026.6 500.7 1017.3 502.3C1008.0 503.9 995.9 500.4 984.4 500.7C972.9 501.0 959.6 501.8 948.0 504.0C936.4 506.2 923.8 509.8 915.0 513.9C906.2 518.0 903.7 524.5 895.5 528.7C887.3 532.9 875.7 538.2 865.8 539.0C855.9 539.8 843.4 537.3 836.0 533.6C828.6 529.9 824.1 521.9 821.4 517.0C818.7 512.1 817.9 509.5 819.8 504.0Z" fill="#a8a8a4" transform="translate(0,2.2)"/><path d="M819.8 504.0C821.7 498.5 825.9 488.7 833.0 484.0C840.1 479.3 851.5 477.1 862.5 476.0C873.5 474.9 887.3 478.2 898.8 477.7C910.3 477.1 920.7 475.5 931.7 472.7C942.7 469.9 955.8 465.7 964.6 461.0C973.4 456.3 976.7 448.4 984.4 444.7C992.1 441.0 1001.9 438.4 1010.7 439.0C1019.5 439.6 1030.7 443.2 1037.0 448.0C1043.3 452.8 1048.1 460.7 1048.6 467.8C1049.1 474.9 1045.2 485.1 1040.0 490.8C1034.8 496.6 1026.6 500.7 1017.3 502.3C1008.0 503.9 995.9 500.4 984.4 500.7C972.9 501.0 959.6 501.8 948.0 504.0C936.4 506.2 923.8 509.8 915.0 513.9C906.2 518.0 903.7 524.5 895.5 528.7C887.3 532.9 875.7 538.2 865.8 539.0C855.9 539.8 843.4 537.3 836.0 533.6C828.6 529.9 824.1 521.9 821.4 517.0C818.7 512.1 817.9 509.5 819.8 504.0Z" fill="url(#tbg)"/><ellipse cx="812" cy="588" rx="47" ry="27" fill="#c6c7c2"/><ellipse cx="770" cy="582" rx="11" ry="6" fill="#d6d6d2"/><polygon points="1053.7,217.0 1062.5,217.0 1064.3,232.0 1064.6,298.0 1061.6,298.0 1058.0,240.0" fill="#bf8a4a" /><polygon points="1137.7,217.0 1143.8,217.0 1143.0,232.0 1140.2,297.0 1137.7,297.0 1136.0,232.0" fill="#bf8a4a" /><polygon points="1065.0,219.0 1136.2,219.0 1136.2,261.0 1065.0,262.0" fill="#93704a" /><rect x="1065" y="219" width="71" height="42" fill="url(#wcg)" opacity=".5"/><polygon points="1332.0,217.0 1361.0,248.0 1440.0,217.0" fill="#8c8c8c" /><polygon points="1269.0,217.0 1331.0,217.0 1360.0,248.0 1360.0,375.0 1269.0,325.7" fill="#fff" /><polygon points="1269.0,325.7 1360.0,375.0 1360.0,491.6 1269.0,390.0" fill="#f8f3f0" /><polygon points="1269.0,390.0 1360.0,491.6 1360.0,499.0 1269.0,396.0" fill="#0a0a0a" /><polygon points="1360.0,248.0 1440.0,217.0 1535.0,217.0 1535.0,304.0 1360.0,375.0" fill="#fff" /><polygon points="1360.0,375.0 1535.0,304.0 1535.0,418.0 1360.0,491.6" fill="#f9f4f1" /><polygon points="1360.0,491.6 1535.0,418.0 1535.0,427.0 1360.0,499.5" fill="#0a0a0a" /><polyline points="1269.0,217.0 1269.0,392.0" fill="none" stroke="#686868" stroke-width="2.2" stroke-linejoin="round" stroke-linecap="round" /><polyline points="1360.0,248.0 1360.0,499.0" fill="none" stroke="#686868" stroke-width="3.4" stroke-linejoin="round" stroke-linecap="round" /><polyline points="1331.0,217.0 1360.0,248.0 1440.0,217.0" fill="none" stroke="#686868" stroke-width="3.2" stroke-linejoin="round" stroke-linecap="round" /><polyline points="1269.0,325.7 1360.0,375.0 1535.0,304.0" fill="none" stroke="#686868" stroke-width="1.8" stroke-linejoin="round" stroke-linecap="round" /><text transform="matrix(0.6 0.8 0 1 1330 262.5)" text-anchor="end" font-family="Liberation Sans,sans-serif" font-size="12.5" font-weight="bold" fill="#59617a" stroke="#59617a" stroke-width=".5" letter-spacing="2.6">THE</text><text transform="matrix(0.6 0.8 0 1 1330 279.5)" text-anchor="end" font-family="Liberation Sans,sans-serif" font-size="12.5" font-weight="bold" fill="#59617a" stroke="#59617a" stroke-width=".5" letter-spacing="2.6">FUTURE</text><text transform="matrix(0.6 0.8 0 1 1330 295.0)" text-anchor="end" font-family="Liberation Sans,sans-serif" font-size="12.5" font-weight="bold" fill="#59617a" stroke="#59617a" stroke-width=".5" letter-spacing="2.6">WILL</text><text transform="matrix(0.6 0.8 0 1 1330 310.5)" text-anchor="end" font-family="Liberation Sans,sans-serif" font-size="12.5" font-weight="bold" fill="#59617a" stroke="#59617a" stroke-width=".5" letter-spacing="2.6">BE</text><text transform="matrix(0.6 0.8 0 1 1330 324.0)" text-anchor="end" font-family="Liberation Sans,sans-serif" font-size="12.5" font-weight="bold" fill="#59617a" stroke="#59617a" stroke-width=".5" letter-spacing="2.6">BRIGHT</text><polygon points="1315.0,312.0 1328.5,329.0 1328.5,337.0 1315.0,320.0" fill="#eef0f4" stroke="#59617a" stroke-width="1.8" stroke-linejoin="round" /></svg><div style="position:absolute;left:-4px;top:264px;width:9px;height:101px;background:#333"></div><div style="position:absolute;left:-3px;top:322px;border:4px solid transparent;border-left:5px solid #707070"></div></div>
<div class="abs" style="left:1498px;top:217px;width:41px;height:284px;background:#9b9ea3;border-left:1px solid #b4b7bc;border-bottom:1px solid #b4b7bc;border-radius:0 4px 0 4px"></div><div class="abs" style="left:1534px;top:481px;width:9px;height:101px;background:#2e2e2e"></div><div class="abs" style="left:1539px;top:217px;width:4px;height:365px;background:#363636"></div><svg class="abs" style="left:1534px;top:539px" width="6" height="10" viewBox="0 0 6 10" ><path d="M5 0V9L.6 4.5z" fill="#6a6a6a"/></svg>
<svg class="abs" style="left:1502px;top:230px" width="32" height="29" viewBox="0 0 32 29" ><defs><linearGradient id="pl2" x1=".2" y1="0" x2=".7" y2="1"><stop offset="0" stop-color="#eef1f6"/><stop offset=".55" stop-color="#b9c3d4"/><stop offset=".56" stop-color="#8b9ab5"/><stop offset="1" stop-color="#8392ae"/></linearGradient>
<radialGradient id="pl3" cx=".4" cy=".35" r=".7"><stop offset="0" stop-color="#e6eaf2"/><stop offset="1" stop-color="#8f9db6"/></radialGradient></defs>
<ellipse cx="4.2" cy="22.2" rx="2.8" ry="2.2" fill="none" stroke="#555a66" stroke-width="1.2"/>
<circle cx="16" cy="14.6" r="11.6" fill="url(#pl2)" stroke="#3f4a60" stroke-width="1.1"/>
<path d="M5.6 21.6L23 12" stroke="#3f4a60" stroke-width="1.1"/>
<circle cx="26" cy="10.2" r="4.8" fill="url(#pl3)" stroke="#3f4a60" stroke-width="1"/></svg>
<div class="abs" style="left:1503px;top:267px;width:30px;height:29px;background:#8797b3;border:1px solid #3b4a66"></div><div class="abs" style="left:1517.5px;top:283px;font:9.5px/10px 'Liberation Sans',sans-serif;color:#1e2638;letter-spacing:-.2px">2D</div><svg class="abs" style="left:1503px;top:304px" width="30" height="29" viewBox="0 0 30 29" ><path d="M.8 6.6L7.6 .8H29V21.4L23.6 27.6H.8z" fill="#cfe4fa" stroke="#2f3c58" stroke-width="1.3" stroke-linejoin="round"/><path d="M.8 6.6L7.6 .8H29L23.6 6.6z" fill="#8797b3" stroke="#2f3c58" stroke-width="1.1" stroke-linejoin="round"/><path d="M23.6 6.6V27.6" stroke="#2f3c58" stroke-width="1.3"/><path d="M7.6 6.6V21.4H29M7.6 21.4L.8 27.6" fill="none" stroke="#2f3c58" stroke-width="1.1"/></svg>
<svg class="abs" style="left:1514px;top:341px" width="9" height="5" viewBox="0 0 9 5" ><path d="M0 0H8L4 4.2z" fill="#2e3646"/></svg>
<svg class="abs" style="left:1503px;top:352.6px" width="30" height="29" viewBox="0 0 30 29" ><path d="M.8 6.6L7.6 .8H29V21.4L23.6 27.6H.8z" fill="#cfe4fa" stroke="#2f3c58" stroke-width="1.3" stroke-linejoin="round"/><path d="M.8 6.6L7.6 .8H29L23.6 6.6z" fill="#8797b3" stroke="#2f3c58" stroke-width="1.1" stroke-linejoin="round"/><path d="M23.6 6.6V27.6" stroke="#2f3c58" stroke-width="1.3"/><path d="M23.6 6.6L29 .8V21.4L23.6 27.6z" fill="#8797b3" stroke="#2f3c58" stroke-width="1.1" stroke-linejoin="round"/><path d="M7.6 6.6V21.4H23.6M7.6 21.4L.8 27.6" fill="none" stroke="#2f3c58" stroke-width="1.1"/></svg>
<svg class="abs" style="left:1514px;top:389.7px" width="9" height="5" viewBox="0 0 9 5" ><path d="M0 0H8L4 4.2z" fill="#2e3646"/></svg>
<svg class="abs" style="left:1501px;top:401px" width="32" height="30" viewBox="0 0 32 30" ><path d="M25.6 8.4A12.2 12.2 0 1 0 27.6 20" fill="none" stroke="#364054" stroke-width="2"/><path d="M20.4 10.8L29 10.6L28 2" fill="none" stroke="#364054" stroke-width="2"/></svg>
<svg class="abs" style="left:1514px;top:439px" width="9" height="5" viewBox="0 0 9 5" ><path d="M0 0H8L4 4.2z" fill="#2e3646"/></svg>
<div class="abs" style="left:1504px;top:450px;width:29px;height:1px;background:#666a72"></div><svg class="abs" style="left:1503px;top:456px" width="31" height="30" viewBox="0 0 31 30" ><path d="M.7 3.4L2.6 .7H27.8L29.7 3.4V28.4H.7z" fill="#8797b3" stroke="#3b4a66" stroke-width="1.2" stroke-linejoin="round"/><path d="M.7 3.4H29.7" stroke="#3b4a66" stroke-width="1"/><path d="M15.2 11V25.6" stroke="#2c3850" stroke-width="1.3"/><path d="M3.8 8.2l1.6 1.5 2.8-3.3" fill="none" stroke="#26304a" stroke-width="1"/><rect x="4.2" y="11.6" width="2.8" height="2.8" fill="none" stroke="#26304a" stroke-width=".9"/><rect x="8.8" y="12.5" width="2.4" height="1.1" fill="#26304a"/><rect x="4.2" y="16.5" width="2.8" height="2.8" fill="none" stroke="#26304a" stroke-width=".9"/><rect x="8.8" y="17.4" width="2.4" height="1.1" fill="#26304a"/><rect x="4.2" y="21.4" width="2.8" height="2.8" fill="none" stroke="#26304a" stroke-width=".9"/><rect x="8.8" y="22.3" width="2.4" height="1.1" fill="#26304a"/><path d="M17.6 8.2l1.6 1.5 2.8-3.3" fill="none" stroke="#26304a" stroke-width="1"/><rect x="18.0" y="11.6" width="2.8" height="2.8" fill="none" stroke="#26304a" stroke-width=".9"/><rect x="22.6" y="12.5" width="2.4" height="1.1" fill="#26304a"/><rect x="18.0" y="16.5" width="2.8" height="2.8" fill="none" stroke="#26304a" stroke-width=".9"/><rect x="22.6" y="17.4" width="2.4" height="1.1" fill="#26304a"/><rect x="18.0" y="21.4" width="2.8" height="2.8" fill="none" stroke="#26304a" stroke-width=".9"/><rect x="22.6" y="22.3" width="2.4" height="1.1" fill="#26304a"/></svg>

<div id="panel" class="abs"></div>

<div id="side" class="abs"><div class="sel"></div>
<svg style="position:absolute;left:20px;top:7px" width="17" height="15" viewBox="0 0 17 15"><path d="M1 .6H15.4V4L7 11H16V14.400000000000002H.6V11L9 4H1z" fill="#fff"/></svg>
<svg style="position:absolute;left:14px;top:44px" width="30" height="26" viewBox="0 0 30 26"><path d="M15 6.4L4.6 13.6M15 6.4L25.4 13.6M15 6.4V19" stroke="#2f92ff" stroke-width="1.6"/><circle cx="15" cy="6.2" r="4.7" fill="#2f92ff"/><circle cx="4.4" cy="13.6" r="3.1" fill="#2f92ff"/><circle cx="25.6" cy="13.6" r="3.1" fill="#2f92ff"/><circle cx="15" cy="19" r="4" fill="#2f92ff"/></svg>
<svg style="position:absolute;left:16px;top:139px" width="26" height="28" viewBox="0 0 26 28"><path d="M1.400000000000001 22Q1.4 13 8 12.6Q13 16 18 12.6Q24.6 13 24.6 22Q24.6 26.6 13 26.6Q1.4 26.6 1.4 22z" fill="#fff"/><circle cx="13" cy="8.2" r="7.4" fill="#fff" stroke="#2a569b" stroke-width="1"/></svg>
<svg style="position:absolute;left:16px;top:236px" width="26" height="24" viewBox="0 0 26 24"><path d="M4 22V9L10 5.4V22zM10.8 22V1L15.6 2.600000000000001V22zM16.4 22V5.4L22 9V22z" fill="#fff"/><rect x="1" y="21.4" width="24" height="2" fill="#fff"/><path d="M5.6 10V21M7.6 9V21M12.4 3V21M14 3.4V21M18 8V21M20 9V21" stroke="#2a569b" stroke-width=".7" opacity=".6"/></svg>
<div class="sv" style="top:73px">公</div><div class="sv" style="top:93px">共</div>
<div class="sv" style="top:170px">我</div><div class="sv" style="top:188px">的</div>
<div class="sv" style="top:266px">工</div><div class="sv" style="top:284px">程</div>
</div>
<div class="abs" style="left:65px;top:593px;width:98px;height:42px;background:#e5e5e5"></div>
<div class="cat" style="top:593px"><svg class="ci" style="background:#46bcf5" width="26" height="26" viewBox="0 0 26 26"><circle cx="12" cy="14" r="5.2" fill="none" stroke="#b4e4fc" stroke-width="1.6"/><circle cx="12" cy="14" r="1.6" fill="#b4e4fc"/><path d="M16.6 11.6Q19 10 19.4 6.6" fill="none" stroke="#b4e4fc" stroke-width="1.8" stroke-linecap="round"/></svg><span style="color:#46b4ee">木纹</span></div>
<div class="cat" style="top:635px"><svg class="ci" style="background:#fdd876" width="26" height="26" viewBox="0 0 26 26"><rect x="6.6" y="6.6" width="12.8" height="12.8" fill="none" stroke="#fff" stroke-width="1.5"/><path d="M10.4 6.6V19.4M10.4 13H19.4M15 6.6V13" stroke="#fff" stroke-width="1.4"/></svg><span>瓷砖</span></div>
<div class="cat" style="top:678px"><svg class="ci" style="background:#9fb6c6" width="26" height="26" viewBox="0 0 26 26"><path d="M7.4 13Q7.6 9.6 12 9.4Q15 8.400000000000002 17.4 10.6Q19.6 11.4 19 14Q17 17 12.4 16.6Q7.6 16.6 7.4 13z" fill="#fff"/><circle cx="18.6" cy="15.6" r="1.2" fill="#fff"/></svg><span>石料</span></div>
<div class="cat" style="top:720px"><svg class="ci" style="background:#fb7aa6" width="26" height="26" viewBox="0 0 26 26"><path d="M6.4 12.6L12.6 6.4L20 13.6L19 17L13.6 20z" fill="#fdd0de"/><path d="M6.4 12.6L13.6 20M9 10L16 17.4M11.6 7.4L19 15" stroke="#fff" stroke-width="1.3"/></svg><span>金属</span></div>
<div class="cat" style="top:763px"><svg class="ci" style="background:#fca874" width="26" height="26" viewBox="0 0 26 26"><rect x="6.6" y="6.6" width="12.8" height="12.8" fill="#fdd0b0" stroke="#fff" stroke-width="1.5"/><path d="M13 6.6V19.4M6.6 13H19.4" stroke="#fff" stroke-width="1.5"/></svg><span>玻璃</span></div>
<div class="cat" style="top:806px"><svg class="ci" style="background:#78c07a" width="26" height="26" viewBox="0 0 26 26"><rect x="7" y="6.6" width="12" height="12.8" fill="#c4e6c4" stroke="#fff" stroke-width="1.3"/><path d="M10 6.6V19.4M13 6.6V19.4M16 6.6V19.4" stroke="#78c07a" stroke-width="1.2"/><path d="M6 7.6V18.4M20 7.6V18.4" stroke="#fff" stroke-width="1.2" stroke-dasharray="1 1"/></svg><span>织物</span></div>
<div class="cat" style="top:848px"><svg class="ci" style="background:#fddc7a" width="26" height="26" viewBox="0 0 26 26"><rect x="11" y="5" width="9" height="5.4" rx="1" transform="rotate(35 15 8)" fill="#fff"/><path d="M13.6 12.6L10.4 15.6" stroke="#fff" stroke-width="2"/><rect x="6" y="14.6" width="5.4" height="4.6" rx="1" transform="rotate(35 8.6 17)" fill="#fff"/></svg><span>涂料</span></div>
<div class="abs" style="left:163px;top:593px;width:9px;height:301px;background:#c9c9c9;border-radius:5px"></div>
<div class="abs" style="left:163px;top:593px;width:9px;height:162px;background:#999;border-radius:5px"></div>
<div class="abs" style="left:173px;top:585px;width:1px;height:318px;background:#e6e6e6"></div>
<!-- search -->
<div class="abs" style="left:989px;top:597px;width:172px;height:29px;border:1px solid #d3dfdf;border-radius:14px;color:#8a8a8a;line-height:27px;padding-left:15px;font-size:15px">在当前库搜索</div>
<svg class="abs" style="left:1127px;top:601px" width="22" height="22" viewBox="0 0 22 22"><circle cx="9.8" cy="10" r="6.4" fill="none" stroke="#8b9a9a" stroke-width="1.4"/><path d="M14.4 14.6l3.6 3.4" stroke="#8b9a9a" stroke-width="1.7" stroke-linecap="round"/></svg>
<svg class="abs" style="left:1171px;top:602px" width="21" height="21" viewBox="0 0 21 21"><path d="M8.2 17.2A7.2 7.2 0 0 1 8.4 3.6M12.8 3.6A7.2 7.2 0 0 1 12.6 17.2" fill="none" stroke="#3a5c8c" stroke-width="1.8"/><path d="M7.4 1.6l3.2 1.8-2.6 2.2zM13.6 19.2l-3.2-1.8 2.600000000000001-2.2z" fill="#3a5c8c"/></svg>
<!-- grid scrollbar -->
<div class="abs" style="left:1205px;top:642px;width:10px;height:257px;background:#c9c9c9;border-radius:5px"></div>
<div class="abs" style="left:1205px;top:642px;width:10px;height:39px;background:#999;border-radius:5px"></div>
<div class="abs" style="left:1216px;top:585px;width:1px;height:318px;background:#e6e6e6"></div>
<!-- preview -->
<svg class="abs" style="left:1495px;top:585px" width="41" height="38" viewBox="0 0 41 38"><path d="M4 0H40V35.7Q28 31 17.5 20Q8 11 4 0z" fill="#808080"/></svg>
<div class="abs" style="left:1229px;top:597px;width:294px;height:294px;background:#000"></div>
<svg class="abs" style="left:1229px;top:597px" width="294" height="294" viewBox="0 0 294 294"><defs><radialGradient id="sg" cx=".46" cy=".40" r=".62"><stop offset="0" stop-color="#f5d4aa"/><stop offset=".5" stop-color="#eac092"/><stop offset=".82" stop-color="#dba976"/><stop offset="1" stop-color="#b07c4a"/></radialGradient><radialGradient id="sh" cx=".5" cy=".5" r=".5"><stop offset=".8" stop-color="#5a3010" stop-opacity="0"/><stop offset=".95" stop-color="#5a3010" stop-opacity=".2"/><stop offset="1" stop-color="#2a1404" stop-opacity=".55"/></radialGradient><filter id="sb" x="-5%" y="-5%" width="110%" height="110%"><feGaussianBlur stdDeviation="1.3"/></filter><clipPath id="sc"><circle cx="146.8" cy="146.5" r="111"/></clipPath></defs><circle cx="146.8" cy="146.5" r="111" fill="url(#sg)"/><g clip-path="url(#sc)"><g filter="url(#sb)"><path d="M154.9 40.2 L157.9 44.4 L160.3 48.6 L162.5 52.8 L164.6 56.9 L166.5 61.1 L168.1 65.3 L169.2 69.5 L169.9 73.7" fill="none" stroke="#f6d6aa" stroke-width="1.6" opacity="0.25" stroke-linecap="round" stroke-linejoin="round"/><path d="M88.1 149.1 L89.3 155.5 L91.0 161.8 L93.0 168.2 L95.2 174.6 L97.4 180.9 L99.4 187.3 L101.3 193.7 L103.2 200.0" fill="none" stroke="#f8dcb4" stroke-width="4.9" opacity="0.27" stroke-linecap="round" stroke-linejoin="round"/><path d="M133.3 87.9 L133.3 91.7 L133.3 95.4 L133.3 99.1 L133.4 102.8 L133.5 106.6 L133.6 110.3 L133.9 114.0 L134.3 117.7" fill="none" stroke="#f6d6aa" stroke-width="5.1" opacity="0.46" stroke-linecap="round" stroke-linejoin="round"/><path d="M153.8 219.1 L153.9 223.9 L153.5 228.7 L152.8 233.5 L152.0 238.3 L151.1 243.1 L150.3 247.9 L149.4 252.7 L146.8 257.5" fill="none" stroke="#b98450" stroke-width="1.3" opacity="0.30" stroke-linecap="round" stroke-linejoin="round"/><path d="M124.3 50.6 L121.9 54.4 L119.8 58.3 L117.9 62.1 L116.1 66.0 L114.3 69.8 L112.5 73.7 L110.7 77.6 L108.9 81.4" fill="none" stroke="#f8dcb4" stroke-width="4.5" opacity="0.45" stroke-linecap="round" stroke-linejoin="round"/><path d="M166.0 49.0 L170.6 55.9 L174.4 62.8 L177.3 69.8 L179.7 76.7 L181.6 83.6 L183.3 90.5 L184.8 97.5 L186.4 104.4" fill="none" stroke="#b07c4a" stroke-width="1.9" opacity="0.33" stroke-linecap="round" stroke-linejoin="round"/><path d="M171.4 46.1 L179.8 54.4 L186.5 62.8 L192.4 71.1 L197.6 79.5 L202.2 87.8 L206.1 96.2 L209.6 104.5 L212.8 112.9" fill="none" stroke="#ad7a48" stroke-width="1.8" opacity="0.38" stroke-linecap="round" stroke-linejoin="round"/><path d="M228.6 156.8 L228.6 160.0 L228.7 163.1 L228.6 166.3 L228.3 169.5 L227.9 172.7 L227.2 175.8 L226.2 179.0 L225.1 182.2" fill="none" stroke="#b07c4a" stroke-width="2.4" opacity="0.29" stroke-linecap="round" stroke-linejoin="round"/><path d="M251.6 131.6 L252.0 134.4 L252.5 137.2 L253.0 140.0 L253.4 142.7 L253.7 145.5 L253.9 148.3 L253.8 151.1 L253.6 153.8" fill="none" stroke="#b98450" stroke-width="2.4" opacity="0.42" stroke-linecap="round" stroke-linejoin="round"/><path d="M141.2 82.9 L141.9 89.2 L142.9 95.5 L144.1 101.9 L145.5 108.2 L147.0 114.5 L148.5 120.8 L149.9 127.1 L151.1 133.4" fill="none" stroke="#ad7a48" stroke-width="1.5" opacity="0.36" stroke-linecap="round" stroke-linejoin="round"/><path d="M138.6 215.5 L139.2 220.7 L139.8 226.0 L140.5 231.2 L141.1 236.5 L141.8 241.7 L142.5 247.0 L143.6 252.2 L146.8 257.5" fill="none" stroke="#ad7a48" stroke-width="3.7" opacity="0.39" stroke-linecap="round" stroke-linejoin="round"/><path d="M88.7 106.1 L88.4 109.4 L87.9 112.7 L87.4 116.0 L86.8 119.3 L86.3 122.6 L85.9 125.9 L85.8 129.3 L85.9 132.6" fill="none" stroke="#b98450" stroke-width="4.0" opacity="0.51" stroke-linecap="round" stroke-linejoin="round"/><path d="M209.8 93.5 L211.1 96.1 L212.3 98.6 L213.5 101.1 L214.7 103.6 L215.8 106.1 L216.9 108.7 L217.9 111.2 L218.9 113.7" fill="none" stroke="#fbe6c8" stroke-width="4.9" opacity="0.26" stroke-linecap="round" stroke-linejoin="round"/><path d="M142.0 139.2 L142.7 143.4 L143.3 147.5 L143.9 151.6 L144.5 155.7 L145.1 159.8 L145.8 163.9 L146.5 168.0 L147.4 172.1" fill="none" stroke="#c08c58" stroke-width="3.3" opacity="0.35" stroke-linecap="round" stroke-linejoin="round"/><path d="M181.1 106.0 L182.7 114.9 L184.0 123.9 L185.0 132.8 L185.8 141.8 L186.3 150.7 L186.5 159.6 L186.4 168.6 L185.9 177.5" fill="none" stroke="#b07c4a" stroke-width="1.9" opacity="0.24" stroke-linecap="round" stroke-linejoin="round"/><path d="M169.0 78.7 L172.6 87.7 L175.7 96.7 L178.2 105.7 L180.3 114.7 L182.3 123.7 L184.6 132.6 L187.1 141.6 L189.3 150.6" fill="none" stroke="#f8dcb4" stroke-width="4.8" opacity="0.51" stroke-linecap="round" stroke-linejoin="round"/><path d="M161.6 81.4 L162.1 87.0 L162.4 92.7 L162.3 98.4 L162.2 104.1 L162.1 109.8 L162.1 115.5 L162.5 121.2 L163.2 126.9" fill="none" stroke="#fbe6c8" stroke-width="1.7" opacity="0.44" stroke-linecap="round" stroke-linejoin="round"/><path d="M160.5 46.9 L164.9 54.6 L168.7 62.2 L172.4 69.9 L175.8 77.5 L178.9 85.1 L181.7 92.8 L184.0 100.4 L186.1 108.0" fill="none" stroke="#f8dcb4" stroke-width="2.8" opacity="0.30" stroke-linecap="round" stroke-linejoin="round"/><path d="M234.3 119.1 L234.7 127.8 L237.0 136.4 L240.6 145.1 L243.3 153.7 L243.1 162.4 L240.2 171.0 L236.6 179.7 L234.4 188.4" fill="none" stroke="#c08c58" stroke-width="1.7" opacity="0.38" stroke-linecap="round" stroke-linejoin="round"/><path d="M88.9 111.2 L88.4 113.7 L87.8 116.2 L87.3 118.8 L86.9 121.3 L86.4 123.8 L86.1 126.3 L85.8 128.9 L85.6 131.4" fill="none" stroke="#c89460" stroke-width="3.3" opacity="0.46" stroke-linecap="round" stroke-linejoin="round"/><path d="M207.4 160.4 L206.6 166.2 L205.7 172.0 L204.6 177.8 L203.4 183.6 L202.1 189.4 L200.6 195.2 L198.8 201.0 L196.8 206.8" fill="none" stroke="#f6d6aa" stroke-width="1.8" opacity="0.41" stroke-linecap="round" stroke-linejoin="round"/><path d="M147.0 196.4 L147.7 199.7 L148.5 203.0 L149.2 206.3 L149.9 209.5 L150.5 212.8 L151.1 216.1 L151.6 219.4 L152.0 222.7" fill="none" stroke="#c08c58" stroke-width="2.4" opacity="0.53" stroke-linecap="round" stroke-linejoin="round"/><path d="M160.6 144.7 L160.3 147.1 L160.0 149.5 L159.7 151.9 L159.5 154.3 L159.4 156.7 L159.2 159.0 L159.2 161.4 L159.1 163.8" fill="none" stroke="#fbe6c8" stroke-width="4.7" opacity="0.30" stroke-linecap="round" stroke-linejoin="round"/><path d="M124.5 162.2 L124.8 166.6 L125.1 171.0 L125.4 175.4 L125.7 179.7 L126.0 184.1 L126.4 188.5 L126.7 192.8 L127.1 197.2" fill="none" stroke="#b98450" stroke-width="1.4" opacity="0.29" stroke-linecap="round" stroke-linejoin="round"/><path d="M105.7 211.6 L108.5 217.3 L111.5 223.1 L115.0 228.8 L118.7 234.6 L122.9 240.3 L127.6 246.0 L133.4 251.8 L146.8 257.5" fill="none" stroke="#b07c4a" stroke-width="4.2" opacity="0.49" stroke-linecap="round" stroke-linejoin="round"/><path d="M155.4 161.5 L156.2 167.8 L156.6 174.2 L156.7 180.5 L156.7 186.8 L156.9 193.1 L157.4 199.4 L158.2 205.7 L159.2 212.0" fill="none" stroke="#b07c4a" stroke-width="1.7" opacity="0.31" stroke-linecap="round" stroke-linejoin="round"/><path d="M89.7 100.2 L89.1 107.5 L89.4 114.9 L90.3 122.2 L91.4 129.5 L92.3 136.8 L93.0 144.2 L93.9 151.5 L95.2 158.8" fill="none" stroke="#fbe6c8" stroke-width="3.4" opacity="0.31" stroke-linecap="round" stroke-linejoin="round"/><path d="M46.6 181.0 L48.9 188.0 L51.3 194.9 L54.0 201.8 L57.4 208.8 L61.9 215.7 L67.6 222.7 L74.8 229.6 L83.7 236.6" fill="none" stroke="#f8dcb4" stroke-width="5.8" opacity="0.45" stroke-linecap="round" stroke-linejoin="round"/><path d="M120.8 42.3 L113.3 47.2 L107.6 52.1 L102.9 57.0 L99.1 61.9 L95.7 66.8 L92.9 71.7 L90.4 76.6 L88.3 81.5" fill="none" stroke="#b98450" stroke-width="3.9" opacity="0.29" stroke-linecap="round" stroke-linejoin="round"/><path d="M116.6 54.9 L112.1 62.9 L108.8 71.0 L106.5 79.0 L105.3 87.0 L105.0 95.1 L105.6 103.1 L106.8 111.1 L108.2 119.2" fill="none" stroke="#c08c58" stroke-width="4.1" opacity="0.49" stroke-linecap="round" stroke-linejoin="round"/><path d="M170.2 40.2 L185.2 47.9 L195.3 55.6 L202.3 63.3 L207.0 71.0 L210.7 78.7 L214.6 86.4 L219.3 94.1 L223.9 101.8" fill="none" stroke="#ad7a48" stroke-width="1.7" opacity="0.45" stroke-linecap="round" stroke-linejoin="round"/><path d="M137.9 42.8 L135.2 48.5 L133.1 54.2 L131.1 59.8 L129.2 65.5 L127.3 71.2 L125.6 76.8 L124.3 82.5 L123.4 88.2" fill="none" stroke="#c08c58" stroke-width="1.3" opacity="0.28" stroke-linecap="round" stroke-linejoin="round"/><path d="M113.3 198.6 L114.7 206.0 L117.0 213.3 L119.8 220.7 L122.4 228.1 L124.9 235.4 L128.1 242.8 L133.1 250.1 L146.8 257.5" fill="none" stroke="#b98450" stroke-width="1.5" opacity="0.54" stroke-linecap="round" stroke-linejoin="round"/><path d="M94.9 217.1 L96.7 221.2 L98.6 225.3 L100.7 229.5 L103.2 233.6 L106.2 237.7 L109.9 241.8 L114.4 245.9 L120.3 250.0" fill="none" stroke="#b07c4a" stroke-width="1.5" opacity="0.52" stroke-linecap="round" stroke-linejoin="round"/><path d="M120.7 43.9 L114.4 49.3 L109.9 54.7 L106.6 60.1 L103.6 65.5 L100.6 70.9 L97.5 76.3 L94.5 81.7 L91.9 87.1" fill="none" stroke="#c08c58" stroke-width="2.3" opacity="0.24" stroke-linecap="round" stroke-linejoin="round"/><path d="M179.1 97.8 L180.7 102.3 L182.2 106.8 L183.5 111.2 L184.7 115.7 L185.7 120.2 L186.7 124.7 L187.5 129.1 L188.3 133.6" fill="none" stroke="#f6d6aa" stroke-width="4.6" opacity="0.40" stroke-linecap="round" stroke-linejoin="round"/><path d="M82.2 161.0 L82.9 165.9 L83.6 170.9 L84.4 175.9 L85.5 180.9 L86.9 185.8 L88.7 190.8 L90.9 195.8 L93.4 200.8" fill="none" stroke="#ad7a48" stroke-width="2.1" opacity="0.36" stroke-linecap="round" stroke-linejoin="round"/><path d="M164.3 159.0 L163.6 164.7 L163.1 170.3 L163.0 175.9 L163.4 181.6 L164.0 187.2 L164.6 192.8 L164.9 198.5 L164.5 204.1" fill="none" stroke="#c08c58" stroke-width="3.2" opacity="0.31" stroke-linecap="round" stroke-linejoin="round"/><path d="M182.8 152.4 L183.2 155.1 L183.5 157.9 L183.7 160.7 L183.9 163.5 L184.1 166.3 L184.4 169.1 L184.6 171.9 L184.9 174.7" fill="none" stroke="#f8dcb4" stroke-width="2.6" opacity="0.38" stroke-linecap="round" stroke-linejoin="round"/><path d="M182.2 49.2 L188.5 54.5 L194.2 59.7 L199.4 65.0 L204.1 70.2 L208.3 75.5 L211.9 80.7 L214.9 86.0 L217.2 91.2" fill="none" stroke="#fbe6c8" stroke-width="4.6" opacity="0.51" stroke-linecap="round" stroke-linejoin="round"/><path d="M212.9 202.6 L209.1 209.5 L205.4 216.3 L201.5 223.2 L197.2 230.0 L191.8 236.9 L184.5 243.8 L173.9 250.6 L146.8 257.5" fill="none" stroke="#b98450" stroke-width="2.6" opacity="0.48" stroke-linecap="round" stroke-linejoin="round"/><path d="M174.3 221.9 L173.7 226.4 L172.6 230.8 L170.9 235.3 L168.8 239.7 L166.1 244.2 L162.9 248.6 L158.4 253.1 L146.8 257.5" fill="none" stroke="#b07c4a" stroke-width="2.5" opacity="0.27" stroke-linecap="round" stroke-linejoin="round"/><path d="M221.3 120.4 L225.3 128.2 L228.7 136.1 L231.1 143.9 L232.1 151.7 L231.8 159.5 L230.9 167.3 L229.9 175.2 L229.3 183.0" fill="none" stroke="#f6d6aa" stroke-width="1.8" opacity="0.31" stroke-linecap="round" stroke-linejoin="round"/><path d="M104.2 95.8 L101.6 102.0 L99.1 108.2 L97.1 114.4 L95.9 120.6 L95.7 126.8 L96.1 133.0 L96.7 139.3 L96.9 145.5" fill="none" stroke="#f6d6aa" stroke-width="3.0" opacity="0.37" stroke-linecap="round" stroke-linejoin="round"/><path d="M61.0 192.7 L63.9 197.7 L67.0 202.8 L70.3 207.8 L73.9 212.9 L77.8 217.9 L82.1 223.0 L86.7 228.0 L91.9 233.1" fill="none" stroke="#c89460" stroke-width="1.2" opacity="0.34" stroke-linecap="round" stroke-linejoin="round"/><path d="M195.3 196.5 L192.7 204.2 L190.2 211.8 L187.9 219.4 L185.2 227.0 L181.6 234.6 L176.1 242.3 L167.9 249.9 L146.8 257.5" fill="none" stroke="#f8dcb4" stroke-width="2.7" opacity="0.38" stroke-linecap="round" stroke-linejoin="round"/><path d="M125.1 161.7 L126.9 169.9 L126.7 178.1 L126.1 186.2 L127.3 194.4 L130.7 202.6 L134.5 210.7 L136.9 218.9 L137.6 227.1" fill="none" stroke="#c89460" stroke-width="3.0" opacity="0.44" stroke-linecap="round" stroke-linejoin="round"/><path d="M59.8 116.4 L58.4 125.1 L57.6 133.8 L57.1 142.5 L56.8 151.2 L56.5 159.9 L56.7 168.6 L57.7 177.3 L59.8 186.0" fill="none" stroke="#f6d6aa" stroke-width="2.8" opacity="0.53" stroke-linecap="round" stroke-linejoin="round"/><path d="M130.4 193.0 L130.9 198.7 L131.7 204.4 L133.0 210.1 L134.5 215.7 L136.3 221.4 L138.3 227.1 L140.2 232.7 L142.0 238.4" fill="none" stroke="#fbe6c8" stroke-width="1.7" opacity="0.23" stroke-linecap="round" stroke-linejoin="round"/><path d="M97.8 193.9 L99.1 200.7 L100.9 207.5 L103.2 214.3 L106.0 221.2 L109.5 228.0 L113.5 234.8 L118.4 241.6 L124.9 248.4" fill="none" stroke="#ad7a48" stroke-width="3.5" opacity="0.28" stroke-linecap="round" stroke-linejoin="round"/><path d="M169.3 176.6 L169.6 179.6 L169.9 182.5 L170.2 185.5 L170.4 188.5 L170.5 191.4 L170.7 194.4 L170.7 197.3 L170.8 200.3" fill="none" stroke="#fbe6c8" stroke-width="5.6" opacity="0.34" stroke-linecap="round" stroke-linejoin="round"/><path d="M219.1 72.9 L224.2 79.5 L228.4 86.1 L232.2 92.7 L235.7 99.3 L239.1 105.9 L242.6 112.5 L246.1 119.1 L249.6 125.7" fill="none" stroke="#b98450" stroke-width="3.6" opacity="0.41" stroke-linecap="round" stroke-linejoin="round"/><path d="M48.4 136.0 L47.5 143.2 L46.9 150.3 L46.8 157.4 L47.1 164.5 L47.9 171.7 L49.1 178.8 L50.9 185.9 L53.2 193.1" fill="none" stroke="#c89460" stroke-width="4.1" opacity="0.43" stroke-linecap="round" stroke-linejoin="round"/><path d="M216.7 169.0 L216.3 174.4 L215.6 179.8 L214.8 185.2 L214.0 190.6 L213.2 196.0 L212.3 201.4 L211.1 206.8 L209.5 212.2" fill="none" stroke="#c89460" stroke-width="2.6" opacity="0.49" stroke-linecap="round" stroke-linejoin="round"/><path d="M165.1 96.3 L165.8 100.3 L166.4 104.2 L167.1 108.2 L167.9 112.1 L168.9 116.1 L170.1 120.0 L171.4 124.0 L172.9 128.0" fill="none" stroke="#c89460" stroke-width="2.2" opacity="0.38" stroke-linecap="round" stroke-linejoin="round"/><path d="M108.9 127.5 L109.5 132.3 L110.1 137.1 L110.5 141.9 L110.5 146.7 L110.1 151.4 L109.3 156.2 L108.5 161.0 L108.0 165.8" fill="none" stroke="#b07c4a" stroke-width="4.0" opacity="0.25" stroke-linecap="round" stroke-linejoin="round"/><path d="M194.7 127.7 L195.4 135.6 L195.6 143.4 L196.0 151.3 L197.1 159.2 L198.7 167.0 L199.8 174.9 L199.9 182.8 L198.6 190.6" fill="none" stroke="#f8dcb4" stroke-width="3.3" opacity="0.30" stroke-linecap="round" stroke-linejoin="round"/><path d="M179.8 105.1 L179.9 111.4 L180.0 117.7 L180.2 124.0 L180.7 130.4 L181.4 136.7 L182.3 143.0 L183.1 149.3 L183.8 155.6" fill="none" stroke="#ad7a48" stroke-width="2.0" opacity="0.26" stroke-linecap="round" stroke-linejoin="round"/><path d="M106.6 58.1 L103.1 64.2 L100.3 70.4 L98.1 76.6 L96.3 82.7 L94.8 88.9 L93.5 95.1 L92.5 101.3 L91.8 107.4" fill="none" stroke="#b07c4a" stroke-width="3.0" opacity="0.54" stroke-linecap="round" stroke-linejoin="round"/><path d="M209.3 91.4 L211.0 96.2 L212.5 101.1 L213.8 105.9 L214.9 110.7 L215.8 115.6 L216.6 120.4 L217.2 125.2 L217.6 130.1" fill="none" stroke="#f6d6aa" stroke-width="4.6" opacity="0.26" stroke-linecap="round" stroke-linejoin="round"/><path d="M226.2 128.1 L227.6 136.9 L228.1 145.6 L228.0 154.4 L227.6 163.1 L226.9 171.8 L226.1 180.6 L224.9 189.3 L223.1 198.1" fill="none" stroke="#f6d6aa" stroke-width="2.0" opacity="0.24" stroke-linecap="round" stroke-linejoin="round"/><path d="M142.5 144.4 L142.6 151.7 L143.2 159.0 L144.0 166.3 L144.8 173.7 L145.4 181.0 L145.6 188.3 L145.3 195.6 L144.7 202.9" fill="none" stroke="#fbe6c8" stroke-width="4.9" opacity="0.42" stroke-linecap="round" stroke-linejoin="round"/><path d="M197.0 78.1 L200.7 84.2 L203.2 90.2 L204.3 96.3 L204.6 102.4 L205.1 108.4 L206.4 114.5 L208.8 120.6 L211.6 126.6" fill="none" stroke="#fbe6c8" stroke-width="1.8" opacity="0.54" stroke-linecap="round" stroke-linejoin="round"/><path d="M64.1 179.4 L65.6 186.3 L67.8 193.1 L70.6 200.0 L74.1 206.8 L78.1 213.7 L82.7 220.6 L87.8 227.4 L93.9 234.3" fill="none" stroke="#f6d6aa" stroke-width="3.5" opacity="0.42" stroke-linecap="round" stroke-linejoin="round"/><path d="M112.3 79.2 L111.3 86.7 L109.5 94.1 L107.6 101.6 L106.6 109.1 L107.3 116.6 L109.1 124.0 L111.1 131.5 L112.0 139.0" fill="none" stroke="#b07c4a" stroke-width="3.2" opacity="0.53" stroke-linecap="round" stroke-linejoin="round"/><path d="M130.5 138.3 L132.0 145.3 L133.5 152.3 L135.1 159.3 L136.8 166.4 L138.4 173.4 L140.0 180.4 L141.5 187.4 L143.0 194.4" fill="none" stroke="#fbe6c8" stroke-width="5.2" opacity="0.52" stroke-linecap="round" stroke-linejoin="round"/><path d="M133.6 123.9 L134.3 128.3 L134.9 132.7 L135.4 137.1 L135.8 141.6 L136.0 146.0 L136.0 150.4 L135.9 154.8 L135.6 159.2" fill="none" stroke="#c89460" stroke-width="3.4" opacity="0.42" stroke-linecap="round" stroke-linejoin="round"/><path d="M66.0 78.7 L62.4 85.9 L59.7 93.2 L57.7 100.4 L56.4 107.6 L55.6 114.8 L55.4 122.1 L55.6 129.3 L56.2 136.5" fill="none" stroke="#b07c4a" stroke-width="1.3" opacity="0.47" stroke-linecap="round" stroke-linejoin="round"/><path d="M138.7 158.4 L139.1 167.5 L140.2 176.6 L141.2 185.7 L141.4 194.7 L140.7 203.8 L139.8 212.9 L139.3 221.9 L139.8 231.0" fill="none" stroke="#f6d6aa" stroke-width="3.3" opacity="0.33" stroke-linecap="round" stroke-linejoin="round"/><path d="M89.1 65.8 L85.2 71.1 L81.7 76.3 L78.4 81.5 L75.6 86.7 L73.3 92.0 L71.5 97.2 L70.3 102.4 L69.7 107.6" fill="none" stroke="#f8dcb4" stroke-width="2.9" opacity="0.33" stroke-linecap="round" stroke-linejoin="round"/><path d="M244.3 111.8 L247.4 117.8 L249.9 123.8 L251.7 129.8 L253.1 135.8 L254.2 141.8 L255.2 147.8 L256.2 153.8 L257.3 159.8" fill="none" stroke="#f6d6aa" stroke-width="4.3" opacity="0.38" stroke-linecap="round" stroke-linejoin="round"/><path d="M140.9 45.2 L140.0 49.4 L139.5 53.5 L139.2 57.6 L139.0 61.7 L138.8 65.8 L138.5 70.0 L138.0 74.1 L137.3 78.2" fill="none" stroke="#fbe6c8" stroke-width="4.2" opacity="0.30" stroke-linecap="round" stroke-linejoin="round"/><path d="M71.8 139.4 L72.5 145.7 L73.5 152.0 L74.5 158.3 L75.0 164.6 L75.1 170.9 L74.8 177.2 L74.5 183.5 L74.6 189.8" fill="none" stroke="#f8dcb4" stroke-width="3.7" opacity="0.46" stroke-linecap="round" stroke-linejoin="round"/><path d="M148.6 87.1 L149.6 95.5 L150.9 104.0 L152.9 112.4 L155.5 120.9 L158.6 129.4 L161.6 137.8 L164.0 146.3 L165.7 154.7" fill="none" stroke="#b07c4a" stroke-width="3.4" opacity="0.27" stroke-linecap="round" stroke-linejoin="round"/><path d="M59.2 181.3 L62.2 189.9 L65.8 198.5 L70.1 207.1 L75.2 215.7 L81.3 224.3 L89.1 232.9 L99.2 241.5 L113.7 250.1" fill="none" stroke="#b07c4a" stroke-width="2.9" opacity="0.44" stroke-linecap="round" stroke-linejoin="round"/><path d="M224.2 119.8 L224.9 125.5 L225.1 131.3 L224.9 137.1 L224.7 142.9 L224.8 148.7 L225.2 154.4 L225.6 160.2 L225.6 166.0" fill="none" stroke="#c08c58" stroke-width="2.9" opacity="0.30" stroke-linecap="round" stroke-linejoin="round"/><path d="M169.5 43.7 L178.6 51.5 L185.2 59.3 L190.4 67.0 L194.8 74.8 L198.9 82.6 L203.0 90.3 L207.2 98.1 L210.9 105.9" fill="none" stroke="#c08c58" stroke-width="2.7" opacity="0.23" stroke-linecap="round" stroke-linejoin="round"/><path d="M147.8 146.9 L148.4 155.6 L149.4 164.3 L151.0 173.0 L153.2 181.7 L155.6 190.5 L157.4 199.2 L158.4 207.9 L158.4 216.6" fill="none" stroke="#c89460" stroke-width="3.8" opacity="0.54" stroke-linecap="round" stroke-linejoin="round"/><path d="M60.2 183.0 L61.9 187.1 L63.8 191.2 L65.8 195.3 L68.0 199.4 L70.3 203.5 L72.8 207.6 L75.5 211.7 L78.3 215.8" fill="none" stroke="#b07c4a" stroke-width="2.3" opacity="0.32" stroke-linecap="round" stroke-linejoin="round"/><path d="M190.3 178.8 L188.6 187.5 L187.7 196.3 L186.3 205.0 L182.9 213.8 L178.1 222.5 L173.2 231.2 L168.6 240.0 L162.9 248.7" fill="none" stroke="#b98450" stroke-width="2.5" opacity="0.25" stroke-linecap="round" stroke-linejoin="round"/><path d="M171.9 200.2 L171.8 205.6 L171.5 211.1 L170.9 216.6 L170.2 222.0 L169.1 227.5 L167.7 233.0 L165.8 238.4 L163.4 243.9" fill="none" stroke="#f6d6aa" stroke-width="3.4" opacity="0.30" stroke-linecap="round" stroke-linejoin="round"/><path d="M127.5 164.2 L127.8 167.6 L128.1 171.1 L128.5 174.5 L128.8 178.0 L129.1 181.4 L129.2 184.9 L129.3 188.3 L129.3 191.8" fill="none" stroke="#b07c4a" stroke-width="1.6" opacity="0.37" stroke-linecap="round" stroke-linejoin="round"/><path d="M104.7 83.7 L104.3 85.8 L104.0 88.0 L103.6 90.1 L103.3 92.3 L102.9 94.4 L102.6 96.6 L102.3 98.8 L102.0 100.9" fill="none" stroke="#ad7a48" stroke-width="4.2" opacity="0.32" stroke-linecap="round" stroke-linejoin="round"/><path d="M246.9 165.8 L246.1 171.3 L244.7 176.9 L242.8 182.5 L240.3 188.0 L237.5 193.6 L234.2 199.2 L230.7 204.7 L226.9 210.3" fill="none" stroke="#f6d6aa" stroke-width="4.1" opacity="0.55" stroke-linecap="round" stroke-linejoin="round"/><path d="M112.5 220.0 L114.7 224.7 L117.3 229.4 L120.1 234.1 L123.1 238.8 L126.2 243.5 L129.7 248.1 L134.4 252.8 L146.8 257.5" fill="none" stroke="#fbe6c8" stroke-width="4.9" opacity="0.49" stroke-linecap="round" stroke-linejoin="round"/><path d="M228.7 181.9 L228.2 185.7 L227.5 189.6 L226.8 193.4 L225.9 197.2 L224.9 201.1 L223.7 204.9 L222.3 208.7 L220.7 212.6" fill="none" stroke="#c08c58" stroke-width="3.1" opacity="0.52" stroke-linecap="round" stroke-linejoin="round"/><path d="M174.7 93.8 L176.0 99.2 L177.2 104.7 L178.3 110.1 L179.3 115.6 L180.2 121.0 L180.9 126.5 L181.6 131.9 L182.2 137.4" fill="none" stroke="#c08c58" stroke-width="1.8" opacity="0.48" stroke-linecap="round" stroke-linejoin="round"/><path d="M223.8 104.5 L224.0 110.4 L223.6 116.4 L223.5 122.3 L224.2 128.2 L226.0 134.1 L228.1 140.0 L229.6 145.9 L229.9 151.8" fill="none" stroke="#ad7a48" stroke-width="3.4" opacity="0.33" stroke-linecap="round" stroke-linejoin="round"/><path d="M84.5 217.2 L86.8 220.4 L89.1 223.5 L91.4 226.7 L93.8 229.8 L96.5 233.0 L99.6 236.1 L103.0 239.3 L107.0 242.4" fill="none" stroke="#b07c4a" stroke-width="2.3" opacity="0.48" stroke-linecap="round" stroke-linejoin="round"/><path d="M42.6 136.8 L42.0 142.3 L42.0 147.9 L42.9 153.4 L44.7 159.0 L47.0 164.5 L49.6 170.1 L52.1 175.6 L54.3 181.2" fill="none" stroke="#b98450" stroke-width="3.2" opacity="0.38" stroke-linecap="round" stroke-linejoin="round"/><path d="M166.6 213.5 L165.8 218.1 L165.0 222.6 L164.3 227.2 L163.6 231.8 L162.7 236.4 L161.7 241.0 L160.1 245.6 L157.8 250.2" fill="none" stroke="#c89460" stroke-width="1.6" opacity="0.23" stroke-linecap="round" stroke-linejoin="round"/><path d="M74.8 223.4 L77.3 226.4 L80.0 229.4 L83.0 232.3 L86.3 235.3 L90.0 238.3 L94.1 241.2 L98.8 244.2 L104.2 247.2" fill="none" stroke="#b07c4a" stroke-width="2.5" opacity="0.46" stroke-linecap="round" stroke-linejoin="round"/><path d="M77.4 113.8 L77.3 116.6 L77.2 119.5 L77.1 122.3 L77.1 125.1 L77.0 128.0 L76.9 130.8 L76.7 133.6 L76.6 136.5" fill="none" stroke="#f6d6aa" stroke-width="3.5" opacity="0.30" stroke-linecap="round" stroke-linejoin="round"/><path d="M124.8 220.6 L126.6 225.2 L128.4 229.8 L130.4 234.4 L132.5 239.1 L134.7 243.7 L137.2 248.3 L140.2 252.9 L146.8 257.5" fill="none" stroke="#c89460" stroke-width="1.5" opacity="0.29" stroke-linecap="round" stroke-linejoin="round"/><path d="M168.0 218.7 L167.5 221.2 L167.1 223.7 L166.6 226.1 L166.2 228.6 L165.6 231.1 L165.1 233.5 L164.4 236.0 L163.7 238.5" fill="none" stroke="#b07c4a" stroke-width="1.8" opacity="0.29" stroke-linecap="round" stroke-linejoin="round"/><path d="M218.2 97.5 L219.5 100.7 L220.7 103.9 L221.8 107.1 L222.9 110.3 L224.0 113.5 L225.1 116.7 L226.3 120.0 L227.5 123.2" fill="none" stroke="#f6d6aa" stroke-width="5.1" opacity="0.26" stroke-linecap="round" stroke-linejoin="round"/><path d="M196.6 60.4 L201.0 65.2 L205.1 70.0 L208.9 74.8 L212.3 79.6 L215.6 84.4 L218.6 89.3 L221.3 94.1 L223.9 98.9" fill="none" stroke="#f6d6aa" stroke-width="3.9" opacity="0.47" stroke-linecap="round" stroke-linejoin="round"/><path d="M139.8 182.3 L140.1 188.3 L140.6 194.3 L141.2 200.3 L141.9 206.3 L142.4 212.3 L142.8 218.3 L143.1 224.3 L143.2 230.3" fill="none" stroke="#b07c4a" stroke-width="2.1" opacity="0.43" stroke-linecap="round" stroke-linejoin="round"/><path d="M75.7 223.9 L79.8 228.1 L84.2 232.3 L89.0 236.5 L94.4 240.7 L100.8 244.9 L108.7 249.1 L119.4 253.3 L146.8 257.5" fill="none" stroke="#ad7a48" stroke-width="3.0" opacity="0.24" stroke-linecap="round" stroke-linejoin="round"/><path d="M99.4 155.0 L100.2 161.2 L100.8 167.5 L101.1 173.8 L101.2 180.0 L101.5 186.3 L102.1 192.6 L103.2 198.8 L104.9 205.1" fill="none" stroke="#b98450" stroke-width="3.6" opacity="0.26" stroke-linecap="round" stroke-linejoin="round"/><path d="M177.6 201.1 L177.7 207.4 L177.0 213.7 L175.5 220.0 L173.4 226.3 L171.0 232.6 L168.2 238.9 L164.9 245.1 L160.1 251.4" fill="none" stroke="#c89460" stroke-width="2.4" opacity="0.25" stroke-linecap="round" stroke-linejoin="round"/><path d="M131.3 161.0 L131.2 165.9 L131.1 170.9 L131.0 175.8 L130.8 180.8 L130.8 185.7 L130.9 190.6 L131.0 195.6 L131.3 200.5" fill="none" stroke="#f8dcb4" stroke-width="4.9" opacity="0.34" stroke-linecap="round" stroke-linejoin="round"/><path d="M111.3 46.8 L100.9 56.2 L94.1 65.6 L88.6 75.0 L83.6 84.3 L79.6 93.7 L77.4 103.1 L76.9 112.5 L76.9 121.9" fill="none" stroke="#c89460" stroke-width="3.8" opacity="0.46" stroke-linecap="round" stroke-linejoin="round"/><path d="M249.5 148.8 L249.7 153.6 L249.5 158.3 L249.0 163.1 L248.1 167.9 L247.0 172.6 L245.7 177.4 L244.3 182.2 L242.7 186.9" fill="none" stroke="#fbe6c8" stroke-width="3.2" opacity="0.47" stroke-linecap="round" stroke-linejoin="round"/><path d="M161.8 187.8 L161.8 196.4 L162.3 204.9 L163.4 213.4 L164.5 221.9 L164.6 230.5 L163.1 239.0 L159.4 247.5 L151.8 256.1" fill="none" stroke="#fbe6c8" stroke-width="5.2" opacity="0.31" stroke-linecap="round" stroke-linejoin="round"/><path d="M81.4 168.1 L81.4 172.5 L81.2 177.0 L81.2 181.4 L81.4 185.9 L82.0 190.3 L83.0 194.7 L84.6 199.2 L86.7 203.6" fill="none" stroke="#f8dcb4" stroke-width="4.8" opacity="0.54" stroke-linecap="round" stroke-linejoin="round"/><path d="M59.4 135.6 L59.7 140.6 L60.1 145.5 L60.6 150.5 L61.1 155.4 L61.7 160.4 L62.3 165.3 L63.0 170.3 L63.9 175.2" fill="none" stroke="#b07c4a" stroke-width="1.5" opacity="0.24" stroke-linecap="round" stroke-linejoin="round"/><path d="M71.8 152.1 L72.3 159.3 L73.6 166.5 L75.4 173.8 L77.4 181.0 L79.4 188.2 L81.3 195.4 L83.3 202.7 L85.7 209.9" fill="none" stroke="#fbe6c8" stroke-width="2.0" opacity="0.36" stroke-linecap="round" stroke-linejoin="round"/><path d="M101.7 163.5 L102.5 169.3 L103.2 175.1 L104.0 180.9 L105.1 186.7 L106.7 192.5 L108.6 198.3 L110.9 204.1 L113.5 209.9" fill="none" stroke="#f6d6aa" stroke-width="5.8" opacity="0.47" stroke-linecap="round" stroke-linejoin="round"/><path d="M195.6 90.1 L196.6 93.1 L197.6 96.1 L198.5 99.1 L199.4 102.1 L200.2 105.1 L201.1 108.1 L201.9 111.1 L202.7 114.1" fill="none" stroke="#fbe6c8" stroke-width="5.3" opacity="0.49" stroke-linecap="round" stroke-linejoin="round"/><path d="M63.2 198.1 L64.0 200.5 L65.0 202.9 L66.2 205.3 L67.6 207.7 L69.1 210.1 L70.8 212.5 L72.6 214.9 L74.5 217.3" fill="none" stroke="#c89460" stroke-width="2.1" opacity="0.35" stroke-linecap="round" stroke-linejoin="round"/><path d="M217.2 67.9 L224.9 77.2 L231.6 86.6 L237.5 95.9 L242.6 105.2 L246.4 114.5 L248.8 123.8 L250.1 133.1 L250.6 142.4" fill="none" stroke="#f6d6aa" stroke-width="4.1" opacity="0.39" stroke-linecap="round" stroke-linejoin="round"/><path d="M126.0 94.0 L125.4 98.7 L124.9 103.4 L124.6 108.1 L124.5 112.7 L124.5 117.4 L124.6 122.1 L124.9 126.8 L125.2 131.4" fill="none" stroke="#ad7a48" stroke-width="2.3" opacity="0.54" stroke-linecap="round" stroke-linejoin="round"/><path d="M167.3 63.4 L168.1 66.2 L168.9 69.1 L169.7 72.0 L170.5 74.8 L171.2 77.7 L171.9 80.6 L172.5 83.4 L173.1 86.3" fill="none" stroke="#fbe6c8" stroke-width="3.7" opacity="0.47" stroke-linecap="round" stroke-linejoin="round"/><path d="M202.5 120.2 L204.5 129.3 L204.4 138.5 L203.8 147.6 L204.3 156.7 L206.0 165.9 L207.2 175.0 L206.4 184.1 L203.6 193.3" fill="none" stroke="#c08c58" stroke-width="2.5" opacity="0.37" stroke-linecap="round" stroke-linejoin="round"/><path d="M173.8 185.8 L172.8 192.4 L171.6 199.0 L170.4 205.6 L169.1 212.1 L167.8 218.7 L166.4 225.3 L164.8 231.9 L162.8 238.5" fill="none" stroke="#f6d6aa" stroke-width="1.8" opacity="0.51" stroke-linecap="round" stroke-linejoin="round"/><path d="M221.5 151.6 L221.1 157.5 L221.5 163.5 L222.5 169.4 L223.2 175.4 L223.1 181.3 L221.7 187.3 L219.2 193.2 L216.0 199.2" fill="none" stroke="#b07c4a" stroke-width="3.2" opacity="0.33" stroke-linecap="round" stroke-linejoin="round"/><path d="M143.2 64.0 L142.8 66.5 L142.4 69.1 L142.0 71.6 L141.7 74.2 L141.3 76.7 L141.1 79.3 L140.9 81.8 L140.7 84.4" fill="none" stroke="#c08c58" stroke-width="1.3" opacity="0.45" stroke-linecap="round" stroke-linejoin="round"/><path d="M250.9 134.4 L251.6 141.1 L252.5 147.9 L253.1 154.6 L253.2 161.3 L252.3 168.1 L250.5 174.8 L248.0 181.5 L245.1 188.3" fill="none" stroke="#b98450" stroke-width="3.6" opacity="0.43" stroke-linecap="round" stroke-linejoin="round"/><path d="M95.7 53.3 L88.2 60.6 L82.1 67.8 L76.2 75.1 L70.4 82.4 L65.2 89.6 L61.5 96.9 L59.4 104.1 L58.5 111.4" fill="none" stroke="#ad7a48" stroke-width="1.4" opacity="0.44" stroke-linecap="round" stroke-linejoin="round"/><ellipse cx="62" cy="70" rx="3" ry="4.4" fill="#b07c48" opacity=".5"/><ellipse cx="96" cy="58" rx="3" ry="4.4" fill="#b07c48" opacity=".5"/><ellipse cx="150" cy="105" rx="3" ry="4.4" fill="#b07c48" opacity=".5"/><ellipse cx="185" cy="58" rx="3" ry="4.4" fill="#b07c48" opacity=".5"/><ellipse cx="225" cy="110" rx="3" ry="4.4" fill="#b07c48" opacity=".5"/><ellipse cx="138" cy="34" rx="3" ry="4.4" fill="#b07c48" opacity=".5"/></g><rect x="30" y="30" width="234" height="234" filter="url(#sw)" opacity=".22"/><path d="M36 147Q70 148 104 148M212 148Q240 148 258 147" stroke="#9a6838" stroke-width="1" fill="none" opacity=".55"/><path d="M104 100Q101 180 118 252M192 42Q206 100 200 148M222 148Q220 200 204 244M120 38Q112 70 110 100" stroke="#a06e3e" stroke-width="1.1" fill="none" opacity=".5"/></g><circle cx="146.8" cy="146.5" r="111" fill="url(#sh)"/></svg>
<svg class="abs" style="left:1495px;top:585px" width="41" height="38" viewBox="0 0 41 38"><path d="M20 5l15.6 14.6M35.6 5L20 19.6" stroke="#fff" stroke-width="2.2"/></svg>
<svg class="abs" style="left:1521px;top:889px" width="12" height="12" viewBox="0 0 12 12" fill="#555"><rect x="8" y="0" width="2" height="2"/><rect x="4" y="4" width="2" height="2"/><rect x="8" y="4" width="2" height="2"/><rect x="0" y="8" width="2" height="2"/><rect x="4" y="8" width="2" height="2"/><rect x="8" y="8" width="2" height="2"/></svg>
<svg width="0" height="0" style="position:absolute"><defs>
<filter id="gh" x="0" y="0" width="100%" height="100%"><feTurbulence type="fractalNoise" baseFrequency="0.012 0.35" numOctaves="3" seed="3"/><feColorMatrix values="0 0 0 0 0  0 0 0 0 0  0 0 0 0 0  1.6 0 0 0 -0.45"/></filter>
<filter id="gv" x="0" y="0" width="100%" height="100%"><feTurbulence type="fractalNoise" baseFrequency="0.3 0.012" numOctaves="3" seed="7"/><feColorMatrix values="0 0 0 0 0  0 0 0 0 0  0 0 0 0 0  1.6 0 0 0 -0.45"/></filter>
<filter id="gl" x="0" y="0" width="100%" height="100%"><feTurbulence type="fractalNoise" baseFrequency="0.02 0.3" numOctaves="3" seed="11"/><feColorMatrix values="0 0 0 0 1  0 0 0 0 1  0 0 0 0 1  1.6 0 0 0 -0.55"/></filter>
<filter id="gb" x="0" y="0" width="100%" height="100%"><feTurbulence type="fractalNoise" baseFrequency="0.05 0.09" numOctaves="3" seed="5"/><feColorMatrix values="0 0 0 0 0  0 0 0 0 0  0 0 0 0 0  1.8 0 0 0 -0.6"/></filter>
<filter id="sw" x="0" y="0" width="100%" height="100%"><feTurbulence type="fractalNoise" baseFrequency="0.045 0.008" numOctaves="4" seed="21"/><feColorMatrix values="0 0 0 0 0.45  0 0 0 0 0.22  0 0 0 0 0.05  2.4 0 0 0 -0.95"/></filter>
<filter id="sw2" x="0" y="0" width="100%" height="100%"><feTurbulence type="fractalNoise" baseFrequency="0.06 0.012" numOctaves="3" seed="9"/><feColorMatrix values="0 0 0 0 1  0 0 0 0 0.93  0 0 0 0 0.8  2.2 0 0 0 -1.0"/></filter>
</defs></svg>
<div class="th" style="left:188.0px;top:642px"><svg width="114" height="114" viewBox="0 0 114 114"><rect width="114" height="114" fill="#8b6c40"/><g transform="translate(0,0)"><polygon points="0,0 57,0 28.5,28.5" fill="#684e2e" opacity=".55"/><polygon points="0,57 57,57 28.5,28.5" fill="#684e2e" opacity=".35"/><polygon points="0,0 0,57 28.5,28.5" fill="#a88a56" opacity=".3"/><polygon points="57,0 57,57 28.5,28.5" fill="#a88a56" opacity=".2"/><polygon points="14,10 43,10 28.5,28.5" fill="#684e2e" opacity=".45"/><polygon points="10,50 47,50 36,30 21,30" fill="#684e2e" opacity=".35"/><path d="M3 3L54 54" stroke="#a88a56" stroke-width="8" opacity="0.24"/><path d="M54 3L3 54" stroke="#a88a56" stroke-width="8" opacity="0.192"/><rect x="0" y="0" width="57" height="57" fill="none" stroke="#684e2e" stroke-width="1" opacity=".35"/></g><g transform="translate(57,0)"><polygon points="0,0 57,0 28.5,28.5" fill="#684e2e" opacity=".55"/><polygon points="0,57 57,57 28.5,28.5" fill="#684e2e" opacity=".35"/><polygon points="0,0 0,57 28.5,28.5" fill="#a88a56" opacity=".3"/><polygon points="57,0 57,57 28.5,28.5" fill="#a88a56" opacity=".2"/><polygon points="14,10 43,10 28.5,28.5" fill="#684e2e" opacity=".45"/><polygon points="10,50 47,50 36,30 21,30" fill="#684e2e" opacity=".35"/><path d="M3 3L54 54" stroke="#a88a56" stroke-width="8" opacity="0.24"/><path d="M54 3L3 54" stroke="#a88a56" stroke-width="8" opacity="0.192"/><rect x="0" y="0" width="57" height="57" fill="none" stroke="#684e2e" stroke-width="1" opacity=".35"/></g><g transform="translate(0,57)"><polygon points="0,0 57,0 28.5,28.5" fill="#684e2e" opacity=".55"/><polygon points="0,57 57,57 28.5,28.5" fill="#684e2e" opacity=".35"/><polygon points="0,0 0,57 28.5,28.5" fill="#a88a56" opacity=".3"/><polygon points="57,0 57,57 28.5,28.5" fill="#a88a56" opacity=".2"/><polygon points="14,10 43,10 28.5,28.5" fill="#684e2e" opacity=".45"/><polygon points="10,50 47,50 36,30 21,30" fill="#684e2e" opacity=".35"/><path d="M3 3L54 54" stroke="#a88a56" stroke-width="8" opacity="0.24"/><path d="M54 3L3 54" stroke="#a88a56" stroke-width="8" opacity="0.192"/><rect x="0" y="0" width="57" height="57" fill="none" stroke="#684e2e" stroke-width="1" opacity=".35"/></g><g transform="translate(57,57)"><polygon points="0,0 57,0 28.5,28.5" fill="#684e2e" opacity=".55"/><polygon points="0,57 57,57 28.5,28.5" fill="#684e2e" opacity=".35"/><polygon points="0,0 0,57 28.5,28.5" fill="#a88a56" opacity=".3"/><polygon points="57,0 57,57 28.5,28.5" fill="#a88a56" opacity=".2"/><polygon points="14,10 43,10 28.5,28.5" fill="#684e2e" opacity=".45"/><polygon points="10,50 47,50 36,30 21,30" fill="#684e2e" opacity=".35"/><path d="M3 3L54 54" stroke="#a88a56" stroke-width="8" opacity="0.24"/><path d="M54 3L3 54" stroke="#a88a56" stroke-width="8" opacity="0.192"/><rect x="0" y="0" width="57" height="57" fill="none" stroke="#684e2e" stroke-width="1" opacity=".35"/></g><rect width="114" height="114" filter="url(#gb)" opacity=".12"/></svg><b>地板</b></div>
<div class="th" style="left:321.7px;top:642px"><svg width="114" height="114" viewBox="0 0 114 114"><rect width="114" height="114" fill="#6b4a28"/><g transform="translate(0,0)"><polygon points="0,0 57,0 28.5,28.5" fill="#4a3018" opacity=".55"/><polygon points="0,57 57,57 28.5,28.5" fill="#4a3018" opacity=".35"/><polygon points="0,0 0,57 28.5,28.5" fill="#8a6034" opacity=".3"/><polygon points="57,0 57,57 28.5,28.5" fill="#8a6034" opacity=".2"/><polygon points="14,10 43,10 28.5,28.5" fill="#4a3018" opacity=".45"/><polygon points="10,50 47,50 36,30 21,30" fill="#4a3018" opacity=".35"/><path d="M3 3L54 54" stroke="#a05c2a" stroke-width="8" opacity="0.34"/><path d="M54 3L3 54" stroke="#a05c2a" stroke-width="8" opacity="0.272"/><rect x="0" y="0" width="57" height="57" fill="none" stroke="#4a3018" stroke-width="1" opacity=".35"/></g><g transform="translate(57,0)"><polygon points="0,0 57,0 28.5,28.5" fill="#4a3018" opacity=".55"/><polygon points="0,57 57,57 28.5,28.5" fill="#4a3018" opacity=".35"/><polygon points="0,0 0,57 28.5,28.5" fill="#8a6034" opacity=".3"/><polygon points="57,0 57,57 28.5,28.5" fill="#8a6034" opacity=".2"/><polygon points="14,10 43,10 28.5,28.5" fill="#4a3018" opacity=".45"/><polygon points="10,50 47,50 36,30 21,30" fill="#4a3018" opacity=".35"/><path d="M3 3L54 54" stroke="#a05c2a" stroke-width="8" opacity="0.34"/><path d="M54 3L3 54" stroke="#a05c2a" stroke-width="8" opacity="0.272"/><rect x="0" y="0" width="57" height="57" fill="none" stroke="#4a3018" stroke-width="1" opacity=".35"/></g><g transform="translate(0,57)"><polygon points="0,0 57,0 28.5,28.5" fill="#4a3018" opacity=".55"/><polygon points="0,57 57,57 28.5,28.5" fill="#4a3018" opacity=".35"/><polygon points="0,0 0,57 28.5,28.5" fill="#8a6034" opacity=".3"/><polygon points="57,0 57,57 28.5,28.5" fill="#8a6034" opacity=".2"/><polygon points="14,10 43,10 28.5,28.5" fill="#4a3018" opacity=".45"/><polygon points="10,50 47,50 36,30 21,30" fill="#4a3018" opacity=".35"/><path d="M3 3L54 54" stroke="#a05c2a" stroke-width="8" opacity="0.34"/><path d="M54 3L3 54" stroke="#a05c2a" stroke-width="8" opacity="0.272"/><rect x="0" y="0" width="57" height="57" fill="none" stroke="#4a3018" stroke-width="1" opacity=".35"/></g><g transform="translate(57,57)"><polygon points="0,0 57,0 28.5,28.5" fill="#4a3018" opacity=".55"/><polygon points="0,57 57,57 28.5,28.5" fill="#4a3018" opacity=".35"/><polygon points="0,0 0,57 28.5,28.5" fill="#8a6034" opacity=".3"/><polygon points="57,0 57,57 28.5,28.5" fill="#8a6034" opacity=".2"/><polygon points="14,10 43,10 28.5,28.5" fill="#4a3018" opacity=".45"/><polygon points="10,50 47,50 36,30 21,30" fill="#4a3018" opacity=".35"/><path d="M3 3L54 54" stroke="#a05c2a" stroke-width="8" opacity="0.34"/><path d="M54 3L3 54" stroke="#a05c2a" stroke-width="8" opacity="0.272"/><rect x="0" y="0" width="57" height="57" fill="none" stroke="#4a3018" stroke-width="1" opacity=".35"/></g><rect width="114" height="114" filter="url(#gv)" opacity=".25"/><rect width="114" height="114" fill="none" stroke="#3a2a1a" stroke-width="8" opacity=".3"/></svg><b>灰木材</b></div>
<div class="th" style="left:455.4px;top:642px"><svg width="114" height="114" viewBox="0 0 114 114"><rect x="0.0" y="0.0" width="57.9" height="19.5" fill="#5f3427"/><rect x="57.4" y="0.0" width="57.1" height="19.5" fill="#613528"/><rect x="57.4" y="0.0" width="1" height="19.0" fill="#b08878" opacity="0.16"/><rect x="0.0" y="19.0" width="64.9" height="19.5" fill="#552e23"/><rect x="64.4" y="19.0" width="50.1" height="19.5" fill="#5b3125"/><rect x="64.4" y="19.0" width="1" height="19.0" fill="#b08878" opacity="0.16"/><rect x="0" y="19.0" width="114" height="1" fill="#b08878" opacity="0.16"/><rect x="0.0" y="38.0" width="77.1" height="19.5" fill="#613428"/><rect x="76.6" y="38.0" width="37.9" height="19.5" fill="#572f23"/><rect x="76.6" y="38.0" width="1" height="19.0" fill="#b08878" opacity="0.16"/><rect x="0" y="38.0" width="114" height="1" fill="#b08878" opacity="0.16"/><rect x="0.0" y="57.0" width="48.6" height="19.5" fill="#5c3226"/><rect x="48.1" y="57.0" width="57.8" height="19.5" fill="#552e23"/><rect x="48.1" y="57.0" width="1" height="19.0" fill="#b08878" opacity="0.16"/><rect x="105.5" y="57.0" width="9.0" height="19.5" fill="#583024"/><rect x="105.5" y="57.0" width="1" height="19.0" fill="#b08878" opacity="0.16"/><rect x="0" y="57.0" width="114" height="1" fill="#b08878" opacity="0.16"/><rect x="0.0" y="76.0" width="37.3" height="19.5" fill="#5f3327"/><rect x="36.8" y="76.0" width="77.7" height="19.5" fill="#572f24"/><rect x="36.8" y="76.0" width="1" height="19.0" fill="#b08878" opacity="0.16"/><rect x="0" y="76.0" width="114" height="1" fill="#b08878" opacity="0.16"/><rect x="0.0" y="95.0" width="68.3" height="19.5" fill="#5d3226"/><rect x="67.8" y="95.0" width="46.7" height="19.5" fill="#572f24"/><rect x="67.8" y="95.0" width="1" height="19.0" fill="#b08878" opacity="0.16"/><rect x="0" y="95.0" width="114" height="1" fill="#b08878" opacity="0.16"/><rect width="114" height="114" filter="url(#gh)" opacity=".32"/></svg><b>灰木材1</b></div>
<div class="th" style="left:589.1px;top:642px"><svg width="114" height="114" viewBox="0 0 114 114"><rect x="0.0" y="0.0" width="20.6" height="13.2" fill="#58361e"/><rect x="20.1" y="0.0" width="89.1" height="13.2" fill="#6f4527"/><rect x="108.7" y="0.0" width="5.8" height="13.2" fill="#6c4326"/><rect x="0.0" y="12.7" width="37.9" height="13.2" fill="#623c22"/><rect x="37.4" y="12.7" width="77.1" height="13.2" fill="#663f23"/><rect x="0.0" y="25.3" width="32.8" height="13.2" fill="#663f24"/><rect x="32.3" y="25.3" width="82.2" height="13.2" fill="#6f4427"/><rect x="0.0" y="38.0" width="74.1" height="13.2" fill="#5c3920"/><rect x="73.6" y="38.0" width="40.9" height="13.2" fill="#56351e"/><rect x="0.0" y="50.7" width="29.2" height="13.2" fill="#643d23"/><rect x="28.7" y="50.7" width="48.8" height="13.2" fill="#51321c"/><rect x="77.0" y="50.7" width="37.5" height="13.2" fill="#663f23"/><rect x="0.0" y="63.3" width="40.8" height="13.2" fill="#603b21"/><rect x="40.3" y="63.3" width="61.0" height="13.2" fill="#5b381f"/><rect x="100.8" y="63.3" width="13.7" height="13.2" fill="#603b21"/><rect x="0.0" y="76.0" width="62.8" height="13.2" fill="#52321c"/><rect x="62.3" y="76.0" width="48.4" height="13.2" fill="#684024"/><rect x="110.1" y="76.0" width="4.4" height="13.2" fill="#6b4225"/><rect x="0.0" y="88.7" width="21.6" height="13.2" fill="#633d22"/><rect x="21.1" y="88.7" width="84.9" height="13.2" fill="#51321c"/><rect x="105.5" y="88.7" width="9.0" height="13.2" fill="#52331d"/><rect x="0.0" y="101.3" width="31.4" height="13.2" fill="#57361e"/><rect x="30.9" y="101.3" width="83.6" height="13.2" fill="#684024"/><rect width="114" height="114" filter="url(#gh)" opacity=".3"/></svg><b>灰木材2</b></div>
<div class="th" style="left:722.8px;top:642px"><svg width="114" height="114" viewBox="0 0 114 114"><rect x="0.0" y="0.0" width="76.3" height="13.2" fill="#bc8148"/><rect x="75.8" y="0.0" width="38.7" height="13.2" fill="#bc8148"/><rect x="0.0" y="12.7" width="52.0" height="13.2" fill="#b67d46"/><rect x="51.5" y="12.7" width="63.0" height="13.2" fill="#c5874c"/><rect x="0.0" y="25.3" width="68.3" height="13.2" fill="#b57c45"/><rect x="67.8" y="25.3" width="46.7" height="13.2" fill="#ca8b4d"/><rect x="0.0" y="38.0" width="26.0" height="13.2" fill="#c98a4d"/><rect x="25.5" y="38.0" width="62.5" height="13.2" fill="#bc8148"/><rect x="87.5" y="38.0" width="27.0" height="13.2" fill="#c98a4d"/><rect x="0.0" y="50.7" width="53.2" height="13.2" fill="#b87e47"/><rect x="52.7" y="50.7" width="61.1" height="13.2" fill="#b67d46"/><rect x="113.3" y="50.7" width="1.2" height="13.2" fill="#b77e46"/><rect x="0.0" y="63.3" width="61.9" height="13.2" fill="#b87e46"/><rect x="61.4" y="63.3" width="53.1" height="13.2" fill="#b57c45"/><rect x="0.0" y="76.0" width="79.7" height="13.2" fill="#bd8249"/><rect x="79.2" y="76.0" width="35.3" height="13.2" fill="#b97f47"/><rect x="0.0" y="88.7" width="56.1" height="13.2" fill="#be8349"/><rect x="55.6" y="88.7" width="58.9" height="13.2" fill="#be8249"/><rect x="0.0" y="101.3" width="23.8" height="13.2" fill="#b57c45"/><rect x="23.3" y="101.3" width="91.2" height="13.2" fill="#bf8349"/><rect width="114" height="114" filter="url(#gh)" opacity=".15"/></svg><b>黄木材</b></div>
<div class="th" style="left:856.5px;top:642px"><svg width="114" height="114" viewBox="0 0 114 114"><rect x="0.0" y="0.0" width="70.8" height="10.9" fill="#965324"/><rect x="70.3" y="0.0" width="44.2" height="10.9" fill="#a05926"/><rect x="0.0" y="10.4" width="58.3" height="10.9" fill="#7a441d"/><rect x="57.8" y="10.4" width="56.7" height="10.9" fill="#894c21"/><rect x="0.0" y="20.7" width="29.5" height="10.9" fill="#82481f"/><rect x="29.0" y="20.7" width="85.5" height="10.9" fill="#894c21"/><rect x="0.0" y="31.1" width="80.5" height="10.9" fill="#a15927"/><rect x="80.0" y="31.1" width="34.5" height="10.9" fill="#894c21"/><rect x="0.0" y="41.5" width="49.8" height="10.9" fill="#8b4d21"/><rect x="49.3" y="41.5" width="65.2" height="10.9" fill="#82481f"/><rect x="0.0" y="51.8" width="44.7" height="10.9" fill="#a15a27"/><rect x="44.2" y="51.8" width="52.8" height="10.9" fill="#a05927"/><rect x="96.6" y="51.8" width="17.9" height="10.9" fill="#915123"/><rect x="0.0" y="62.2" width="50.5" height="10.9" fill="#81481f"/><rect x="50.0" y="62.2" width="62.4" height="10.9" fill="#985525"/><rect x="111.9" y="62.2" width="2.6" height="10.9" fill="#9c5725"/><rect x="0.0" y="72.5" width="42.2" height="10.9" fill="#985424"/><rect x="41.7" y="72.5" width="72.8" height="10.9" fill="#945224"/><rect x="0.0" y="82.9" width="60.3" height="10.9" fill="#854a20"/><rect x="59.8" y="82.9" width="54.7" height="10.9" fill="#955324"/><rect x="0.0" y="93.3" width="37.4" height="10.9" fill="#945224"/><rect x="36.9" y="93.3" width="69.8" height="10.9" fill="#82481f"/><rect x="106.1" y="93.3" width="8.4" height="10.9" fill="#9f5926"/><rect x="0.0" y="103.6" width="59.5" height="10.9" fill="#76411c"/><rect x="59.0" y="103.6" width="55.5" height="10.9" fill="#8e4f22"/><rect width="114" height="114" filter="url(#gh)" opacity=".25"/></svg><b>灰木材3</b></div>
<div class="th" style="left:990.2px;top:642px"><svg width="114" height="114" viewBox="0 0 114 114"><rect x="0.0" y="0.0" width="19.5" height="38.0" fill="#4f4135"/><rect x="0.0" y="37.5" width="19.5" height="77.0" fill="#534438"/><rect x="19.0" y="0.0" width="19.5" height="65.8" fill="#4e4035"/><rect x="19.0" y="65.3" width="19.5" height="49.2" fill="#514336"/><rect x="19.0" y="0" width="1" height="114" fill="#2a2018" opacity="0.25"/><rect x="38.0" y="0.0" width="19.5" height="72.1" fill="#4e4035"/><rect x="38.0" y="71.6" width="19.5" height="42.9" fill="#534438"/><rect x="38.0" y="0" width="1" height="114" fill="#2a2018" opacity="0.25"/><rect x="57.0" y="0.0" width="19.5" height="81.4" fill="#544539"/><rect x="57.0" y="80.9" width="19.5" height="33.6" fill="#544538"/><rect x="57.0" y="0" width="1" height="114" fill="#2a2018" opacity="0.25"/><rect x="76.0" y="0.0" width="19.5" height="56.8" fill="#4c3f33"/><rect x="76.0" y="56.3" width="19.5" height="58.2" fill="#534438"/><rect x="76.0" y="0" width="1" height="114" fill="#2a2018" opacity="0.25"/><rect x="95.0" y="0.0" width="19.5" height="86.1" fill="#514337"/><rect x="95.0" y="85.6" width="19.5" height="28.9" fill="#524337"/><rect x="95.0" y="0" width="1" height="114" fill="#2a2018" opacity="0.25"/><rect width="114" height="114" filter="url(#gv)" opacity=".18"/></svg><b>灰木材4</b></div>
<div class="th" style="left:188.0px;top:773px"><svg width="114" height="114" viewBox="0 0 114 114"><rect width="114" height="114" fill="#a57352"/><rect width="114" height="114" filter="url(#gl)" opacity=".0"/><rect width="114" height="114" filter="url(#gv)" opacity=".16"/></svg><b>乱纹-01</b></div>
<div class="th" style="left:321.7px;top:773px"><svg width="114" height="114" viewBox="0 0 114 114"><rect width="114" height="114" fill="#30221d"/><rect width="114" height="114" filter="url(#gh)" opacity=".15"/></svg><b>乱纹-02</b></div>
<div class="th" style="left:455.4px;top:773px"><svg width="114" height="114" viewBox="0 0 114 114"><rect width="114" height="114" fill="#2b1f1b"/><rect width="114" height="114" filter="url(#gh)" opacity=".12"/></svg><b>乱纹-03</b></div>
<div class="th" style="left:589.1px;top:773px"><svg width="114" height="114" viewBox="0 0 114 114"><rect width="114" height="114" fill="#4f261c"/><rect width="114" height="114" filter="url(#gh)" opacity=".12"/></svg><b>乱纹-04</b></div>
<div class="th" style="left:722.8px;top:773px"><svg width="114" height="114" viewBox="0 0 114 114"><rect width="114" height="114" fill="#5f3325"/><rect width="114" height="114" filter="url(#gh)" opacity=".12"/></svg><b>乱纹-05</b></div>
<div class="th" style="left:856.5px;top:773px"><svg width="114" height="114" viewBox="0 0 114 114"><rect width="114" height="114" fill="#dcaa7a"/><rect width="114" height="22" fill="#c89664" opacity=".35"/><rect width="114" height="114" filter="url(#gh)" opacity=".05"/></svg><b>乱纹-06</b></div>
<div class="th" style="left:990.2px;top:773px"><svg width="114" height="114" viewBox="0 0 114 114"><rect width="114" height="114" fill="#b3af9f"/><rect width="114" height="114" filter="url(#gh)" opacity=".12"/><rect width="114" height="114" filter="url(#gb)" opacity=".09"/></svg><b>乱纹-07</b></div>

</body>
</html>
